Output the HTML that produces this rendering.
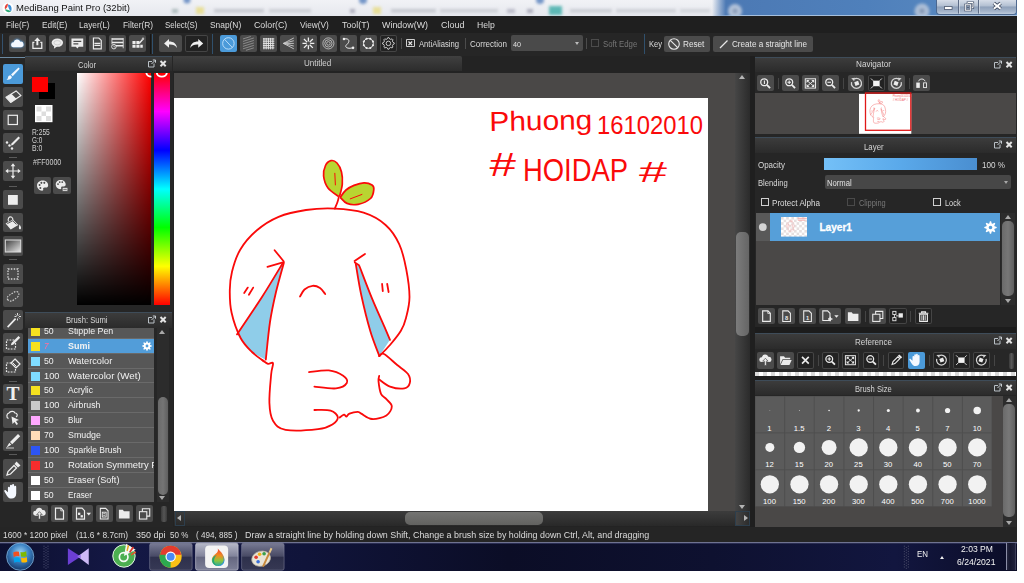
<!DOCTYPE html>
<html lang="en"><head><meta charset="utf-8"><title>MediBang Paint Pro (32bit)</title>
<style>
html,body{margin:0;padding:0;background:#fff;}
body{width:1024px;height:583px;overflow:hidden;position:relative;font-family:"Liberation Sans","DejaVu Sans",sans-serif;font-size:9px;color:#ddd;}
.a{position:absolute;box-sizing:border-box;}
.t{white-space:nowrap;overflow:visible;}
svg{display:block;overflow:visible;}
.a>svg{position:absolute;left:0;top:0;}
</style></head><body>
<div class="a" style="left:0px;top:0px;width:1017px;height:571px;background:#262626;"></div>
<div class="a" style="left:0px;top:0px;width:1017px;height:16px;background:linear-gradient(#f1f2f6,#e6e8ee);overflow:hidden;">
<svg width="1017" height="16" style="position:absolute;left:0;top:0">
<defs><filter id="bl" x="-20%" y="-100%" width="140%" height="300%"><feGaussianBlur stdDeviation="1.6"/></filter>
<linearGradient id="tb" x1="0" x2="1"><stop offset="0" stop-color="#4c79b4" stop-opacity="0"/><stop offset=".045" stop-color="#4c79b4"/><stop offset=".5" stop-color="#4f80bb"/><stop offset="1" stop-color="#5d8cc2"/></linearGradient></defs>
<rect x="712" y="-3" width="310" height="22" fill="url(#tb)"/>
<g filter="url(#bl)" opacity=".75">
<circle cx="187" cy="0" r="3.5" fill="#4a76b8"/><rect x="196" y="7" width="8" height="7" fill="#e8dc7a"/>
<rect x="172" y="9" width="6" height="4" fill="#9aa"/>
<rect x="214" y="9" width="50" height="3.5" fill="#b9bcc4"/><rect x="269" y="9" width="42" height="3.5" fill="#c2c5cc"/>
<circle cx="363" cy="0" r="4" fill="#4a76b8"/><rect x="373" y="7" width="8" height="7" fill="#e8dc7a"/><rect x="350" y="9" width="5" height="4" fill="#99a"/>
<rect x="391" y="9" width="45" height="3.5" fill="#b9bcc4"/><rect x="440" y="9" width="58" height="3.5" fill="#c2c5cc"/><rect x="507" y="9" width="8" height="4" fill="#aab"/>
<rect x="527" y="9" width="6" height="4" fill="#99a"/><circle cx="540" cy="0" r="4" fill="#4a76b8"/>
<rect x="549" y="6" width="13" height="9" fill="#2fa7a2"/>
<rect x="570" y="9" width="42" height="3.5" fill="#c0c3ca"/><rect x="616" y="9" width="60" height="3.5" fill="#c4c7ce"/><rect x="680" y="9" width="30" height="3.5" fill="#c8cbd2"/>
<circle cx="735" cy="11" r="7" fill="#d5dbe6"/><circle cx="735" cy="11" r="2.5" fill="#9aa3b5"/>
<circle cx="922" cy="11" r="7.5" fill="#c9d1df"/><circle cx="922" cy="11" r="2.5" fill="#8d97aa"/>
</g>
</svg></div>
<div class="a" style="left:2px;top:2px;width:12px;height:12px;"><svg width="12" height="12" viewBox="0 0 12 12"><circle cx="6" cy="6" r="5.6" fill="#fff"/><path d="M6 1.5C3 2.5 2.2 5 3 7.5 5 6 6 4 6 1.5z" fill="#e8453c"/><path d="M3 7.5C4 10 7 11 9 9.5 7.5 8 5 7.5 3 7.5z" fill="#2aa876"/><path d="M6 2.5c3 0 4.5 3.5 3 7C7.5 8 6 6 6 2.5z" fill="#3a8fd6"/></svg></div>
<div class="a t" style="left:16.2px;top:2.1px;width:133.8px;height:12px;line-height:12px;color:#111;font-size:9.51px;transform:scaleX(0.9977);transform-origin:0 50%;">MediBang Paint Pro (32bit)</div>
<div class="a" style="left:937px;top:0px;width:78.5px;height:14px;background:linear-gradient(#d6dde8,#b3c0d2 42%,#8fa1ba 50%,#a3b3c9 80%,#bccadb);border-radius:0 0 3px 3px;box-shadow:0 0 0 1px rgba(70,84,110,.6);">
<svg width="78.500" height="14" viewBox="0 0 78.500 14" style="position:absolute;left:0;top:0">
<path d="M21.500 0v13.500M41.500 0v13.500" stroke="#5d6c86" stroke-width="1"/>
<path d="M22.500 0v13.500M42.500 0v13.500" stroke="#dfe6ef" stroke-opacity=".6" stroke-width="1"/>
<rect x="7.500" y="6.600" width="7.600" height="2.800" fill="#fff" stroke="#4a566c" stroke-width=".8"/>
<path d="M30.800 4.300v-1.800h5.200v5.200h-1.800" fill="none" stroke="#46536a" stroke-width="2.200"/><path d="M30.800 4.300v-1.800h5.200v5.200h-1.800" fill="none" stroke="#fff" stroke-width="1"/><rect x="28.300" y="4.800" width="5.400" height="5.400" fill="#97a8c0" stroke="#46536a" stroke-width="2.200"/><rect x="28.300" y="4.800" width="5.400" height="5.400" fill="none" stroke="#fff" stroke-width="1"/><rect x="30.200" y="6.700" width="1.600" height="1.600" fill="#46536a"/>
<path d="M56.800 3.200l6.800 5.600M63.600 3.200l-6.800 5.600" stroke="#3d485c" stroke-width="3.600"/>
<path d="M56.800 3.200l6.800 5.600M63.600 3.200l-6.800 5.600" stroke="#fff" stroke-width="2"/>
</svg></div>
<div class="a" style="left:712px;top:14.5px;width:305px;height:1.5px;background:linear-gradient(to right,rgba(175,198,224,0),rgba(175,198,224,.9) 8%,rgba(175,198,224,.9));"></div>
<div class="a" style="left:0px;top:16px;width:1017px;height:16.5px;background:#1f1f1f;"></div>
<div class="a t" style="left:6.2px;top:18.7px;width:43.3px;height:12px;line-height:12px;color:#dcdcdc;font-size:8.9px;transform:scaleX(0.9090);transform-origin:0 50%;">File(F)</div>
<div class="a t" style="left:41.7px;top:18.7px;width:45.3px;height:12px;line-height:12px;color:#dcdcdc;font-size:8.9px;transform:scaleX(0.9328);transform-origin:0 50%;">Edit(E)</div>
<div class="a t" style="left:79.2px;top:18.7px;width:50.8px;height:12px;line-height:12px;color:#dcdcdc;font-size:8.9px;transform:scaleX(0.9320);transform-origin:0 50%;">Layer(L)</div>
<div class="a t" style="left:122.5px;top:18.7px;width:50px;height:12px;line-height:12px;color:#dcdcdc;font-size:8.9px;transform:scaleX(0.9363);transform-origin:0 50%;">Filter(R)</div>
<div class="a t" style="left:165px;top:18.7px;width:52.5px;height:12px;line-height:12px;color:#dcdcdc;font-size:8.9px;transform:scaleX(0.8905);transform-origin:0 50%;">Select(S)</div>
<div class="a t" style="left:210px;top:18.7px;width:51.2px;height:12px;line-height:12px;color:#dcdcdc;font-size:8.9px;transform:scaleX(0.9441);transform-origin:0 50%;">Snap(N)</div>
<div class="a t" style="left:253.7px;top:18.7px;width:53.3px;height:12px;line-height:12px;color:#dcdcdc;font-size:8.9px;transform:scaleX(0.9932);transform-origin:0 50%;">Color(C)</div>
<div class="a t" style="left:299.5px;top:18.7px;width:48.7px;height:12px;line-height:12px;color:#dcdcdc;font-size:8.9px;transform:scaleX(0.9286);transform-origin:0 50%;">View(V)</div>
<div class="a t" style="left:341.7px;top:18.7px;width:47.5px;height:12px;line-height:12px;color:#dcdcdc;font-size:8.9px;transform:scaleX(0.9960);transform-origin:0 50%;">Tool(T)</div>
<div class="a t" style="left:382px;top:18.7px;width:66px;height:12px;line-height:12px;color:#dcdcdc;font-size:8.9px;transform:scaleX(1.0032);transform-origin:0 50%;">Window(W)</div>
<div class="a t" style="left:440.7px;top:18.7px;width:43.5px;height:12px;line-height:12px;color:#dcdcdc;font-size:8.9px;transform:scaleX(1.0134);transform-origin:0 50%;">Cloud</div>
<div class="a t" style="left:476.7px;top:18.7px;width:37.8px;height:12px;line-height:12px;color:#dcdcdc;font-size:8.9px;transform:scaleX(0.9752);transform-origin:0 50%;">Help</div>
<div class="a" style="left:0px;top:32.5px;width:1017px;height:23.5px;background:#262626;"></div>
<div class="a" style="left:2px;top:33.5px;width:1px;height:20.5px;background:#34516d;"></div>
<div class="a" style="left:150px;top:33.5px;width:1px;height:20.5px;background:#151515;"></div>
<div class="a" style="left:152px;top:33.5px;width:1px;height:20.5px;background:#30506c;"></div>
<div class="a" style="left:212px;top:33.5px;width:1px;height:20.5px;background:#30506c;"></div>
<div class="a" style="left:644px;top:33.5px;width:1px;height:20.5px;background:#30506c;"></div>
<div class="a" style="left:9.3px;top:35px;width:16.7px;height:16.8px;background:#4b4b4b;border-radius:2px;"><svg width="16.7" height="16.8" viewBox="0 0 17 17"><defs><filter id="glow" x="-50%" y="-50%" width="200%" height="200%"><feGaussianBlur stdDeviation="1.2"/></filter></defs><path d="M4.500 12.500a2.700 2.700 0 0 1 .3-5.400 3.600 3.600 0 0 1 6.800-.6 2.900 2.900 0 0 1 1 5.800z" fill="#58a8f0" filter="url(#glow)"/><path d="M4.500 12.300a2.500 2.500 0 0 1 .3-5 3.500 3.500 0 0 1 6.700-.6 2.800 2.800 0 0 1 .9 5.600z" fill="#f4f8ff"/></svg></div>
<div class="a" style="left:29.33px;top:35px;width:16.7px;height:16.8px;background:#4b4b4b;border-radius:2px;"><svg width="16.7" height="16.8" viewBox="0 0 17 17"><path d="M5.500 7.500h-1.500v6h9v-6h-1.500" fill="none" stroke="#ececec" stroke-width="1.3" /><path d="M8.500 2.500l3.200 3.500h-2.200v4.500h-2v-4.500h-2.200z" fill="#ececec" /></svg></div>
<div class="a" style="left:49.36px;top:35px;width:16.7px;height:16.8px;background:#4b4b4b;border-radius:2px;"><svg width="16.7" height="16.8" viewBox="0 0 17 17"><ellipse cx="8.500" cy="7.800" rx="5.800" ry="4.200" fill="#ececec"/><path d="M5.500 10.500l-.5 3.500 3.500-2.500z" fill="#ececec" /><ellipse cx="8.500" cy="7.800" rx="3.500" ry="2.200" fill="none" stroke="#bdbdbd" stroke-width=".6"/></svg></div>
<div class="a" style="left:69.39px;top:35px;width:16.7px;height:16.8px;background:#4b4b4b;border-radius:2px;"><svg width="16.7" height="16.8" viewBox="0 0 17 17"><path d="M2.500 3.500h12v8.500h-4.500l-1.500 1.800-1.500-1.800h-4.500z" fill="#ececec" /><path d="M4.500 6.500h8M4.500 9h5" stroke="#4b4b4b" stroke-width="1.200"/></svg></div>
<div class="a" style="left:89.42px;top:35px;width:16.7px;height:16.8px;background:#4b4b4b;border-radius:2px;"><svg width="16.7" height="16.8" viewBox="0 0 17 17"><path d="M4.500 3h5.500l2.500 2.500v8.500h-8z" fill="none" stroke="#ececec" stroke-width="1.2" /><path d="M5.500 8.500h6M5.500 10.500h6" stroke="#ececec" stroke-width="1.300"/></svg></div>
<div class="a" style="left:109.45px;top:35px;width:16.7px;height:16.8px;background:#4b4b4b;border-radius:2px;"><svg width="16.7" height="16.8" viewBox="0 0 17 17"><path d="M3 4h11.500M3 7.500h11.500M7 11h7.500" stroke="#ececec" stroke-width="1.500"/><path d="M3 3v6.500M14.500 3v10.500" fill="none" stroke="#ececec" stroke-width="0.8" /><circle cx="5" cy="11.800" r="2.300" fill="none" stroke="#ececec" stroke-width=".9"/><path d="M5 10.500v1.500h1.200" fill="none" stroke="#ececec" stroke-width="0.7" /></svg></div>
<div class="a" style="left:129.48px;top:35px;width:16.7px;height:16.8px;background:#4b4b4b;border-radius:2px;"><svg width="16.7" height="16.8" viewBox="0 0 17 17"><path d="M3.500 6h3.200v3h-3.200zM7.500 6h3.200v3h-3.200zM3.500 9.800h3.200v3.200h-3.200zM7.500 9.800h3.200v3.200h-3.200zM11.500 9.800h2.500v3.200h-2.500z" fill="#ececec"/><path d="M10.500 8.500l3.800-4.500" stroke="#ececec" stroke-width="1.500"/><circle cx="14.300" cy="3.800" r="1.200" fill="#bbb"/></svg></div>
<div class="a" style="left:159.2px;top:35px;width:22.5px;height:16.8px;background:#4b4b4b;border-radius:2px;"><svg width="22.5" height="16.8" viewBox="0 0 22.5 17"><path d="M5 8.500l5-4.500v2.600c4.500 0 7.500 2 8 6.500-1.800-2.800-4.200-3.600-8-3.400v3.300z" fill="#f0f0f0"/></svg></div>
<div class="a" style="left:184.5px;top:35px;width:23px;height:16.8px;background:#222;box-shadow:inset 0 0 0 1px #454545;border-radius:2px;"><svg width="23" height="16.8" viewBox="0 0 22.5 17"><path d="M18 8.500l-5-4.500v2.600c-4.500 0-7.500 2-8 6.500 1.800-2.800 4.200-3.600 8-3.400v3.300z" fill="#f0f0f0"/></svg></div>
<div class="a" style="left:220px;top:35px;width:16.8px;height:16.8px;background:#4b9ad9;border-radius:2px;"><svg width="16.8" height="16.8" viewBox="0 0 17 17"><circle cx="8.500" cy="8.500" r="5.800" fill="none" stroke="#b9dcfa" stroke-width="1"/><path d="M4.500 4.300l8 8.400" stroke="#b9dcfa" stroke-width="1"/></svg></div>
<div class="a" style="left:240.06px;top:35px;width:16.8px;height:16.8px;background:#4b4b4b;border-radius:2px;"><svg width="16.8" height="16.8" viewBox="0 0 17 17"><path d="M3 6.500l11-3.500M3 9l11-3.500M3 11.500l11-3.500M3 14l11-3.500M3 4l8-2.500M6 15.500l8-2.500" stroke="#9a9a9a" stroke-width=".8"/></svg></div>
<div class="a" style="left:260.12px;top:35px;width:16.8px;height:16.8px;background:#4b4b4b;border-radius:2px;"><svg width="16.8" height="16.8" viewBox="0 0 17 17"><path d="M4 3v11.500M6.250 3v11.500M8.500 3v11.500M10.750 3v11.500M13 3v11.500M3 4h11.500M3 6.250h11.500M3 8.500h11.500M3 10.750h11.500M3 13h11.500" stroke="#e8e8e8" stroke-width="1"/></svg></div>
<div class="a" style="left:280.18px;top:35px;width:16.8px;height:16.8px;background:#4b4b4b;border-radius:2px;"><svg width="16.8" height="16.8" viewBox="0 0 17 17"><path d="M3.500 8.500l10.500-5.500M3.500 8.500l10.500-2.700M3.500 8.500h10.500M3.500 8.500l10.500 2.700M3.500 8.500l10.500 5.500" stroke="#cfcfcf" stroke-width=".9"/></svg></div>
<div class="a" style="left:300.24px;top:35px;width:16.8px;height:16.8px;background:#4b4b4b;border-radius:2px;"><svg width="16.8" height="16.8" viewBox="0 0 17 17"><path d="M8.500 2.500v4.200M8.500 10.300v4.200M2.500 8.500h4.200M10.300 8.500h4.200M4 4l3.200 3.200M9.800 9.800l3.200 3.200M13 4l-3.200 3.200M7.200 9.800l-3.200 3.200" stroke="#f0f0f0" stroke-width="1.300"/></svg></div>
<div class="a" style="left:320.3px;top:35px;width:16.8px;height:16.8px;background:#4b4b4b;border-radius:2px;"><svg width="16.8" height="16.8" viewBox="0 0 17 17"><circle cx="8.500" cy="8.500" r="5.600" fill="none" stroke="#d0d0d0" stroke-width=".8"/><circle cx="8.500" cy="8.500" r="3.700" fill="none" stroke="#d0d0d0" stroke-width=".8"/><circle cx="8.500" cy="8.500" r="1.800" fill="none" stroke="#d0d0d0" stroke-width=".8"/></svg></div>
<div class="a" style="left:340.36px;top:35px;width:16.8px;height:16.8px;background:#4b4b4b;border-radius:2px;"><svg width="16.8" height="16.8" viewBox="0 0 17 17"><path d="M4 4c6-1 6 3 3 5.500s0 5 6 3.500" fill="none" stroke="#ececec" stroke-width="1" /><circle cx="4" cy="4" r="1.300" fill="#ececec"/><circle cx="13.200" cy="13" r="1.300" fill="#ececec"/></svg></div>
<div class="a" style="left:360.42px;top:35px;width:16.8px;height:16.8px;background:#4b4b4b;border-radius:2px;"><svg width="16.8" height="16.8" viewBox="0 0 17 17"><circle cx="8.500" cy="8.500" r="5" fill="none" stroke="#ececec" stroke-width="1"/><circle cx="13.12" cy="10.41" r="1.050" fill="#ececec"/><circle cx="10.41" cy="13.12" r="1.050" fill="#ececec"/><circle cx="6.59" cy="13.12" r="1.050" fill="#ececec"/><circle cx="3.88" cy="10.41" r="1.050" fill="#ececec"/><circle cx="3.88" cy="6.59" r="1.050" fill="#ececec"/><circle cx="6.59" cy="3.88" r="1.050" fill="#ececec"/><circle cx="10.41" cy="3.88" r="1.050" fill="#ececec"/><circle cx="13.12" cy="6.59" r="1.050" fill="#ececec"/></svg></div>
<div class="a" style="left:380.48px;top:35px;width:16.8px;height:16.8px;background:#222;box-shadow:inset 0 0 0 1px #454545;border-radius:2px;"><svg width="16.8" height="16.8" viewBox="0 0 17 17"><path d="M14.37 7.92L14.37 9.08L12.90 9.84L12.56 10.67L13.06 12.24L12.24 13.06L10.67 12.56L9.84 12.90L9.08 14.37L7.92 14.37L7.16 12.90L6.33 12.56L4.76 13.06L3.94 12.24L4.44 10.67L4.10 9.84L2.63 9.08L2.63 7.92L4.10 7.16L4.44 6.33L3.94 4.76L4.76 3.94L6.33 4.44L7.16 4.10L7.92 2.63L9.08 2.63L9.84 4.10L10.67 4.44L12.24 3.94L13.06 4.76L12.56 6.33L12.90 7.16z" fill="none" stroke="#d8d8d8" stroke-width=".9" stroke-linejoin="round"/><circle cx="8.500" cy="8.500" r="2.300" fill="none" stroke="#d8d8d8" stroke-width=".9"/></svg></div>
<div class="a" style="left:401px;top:38px;width:1px;height:11px;background:#4c4c4c;"></div>
<div class="a" style="left:406.2px;top:38.5px;width:8.6px;height:8.6px;box-shadow:inset 0 0 0 1px #cfcfcf;border-radius:1px;"><svg width="8.600" height="8.600" viewBox="0 0 8.600 8.600"><path d="M2.500 2.500l3.600 3.600M6.100 2.500l-3.600 3.600" stroke="#e6e6e6" stroke-width="1.300"/></svg></div>
<div class="a t" style="left:419.2px;top:37.9px;width:60px;height:12px;line-height:12px;color:#dcdcdc;font-size:8.9px;transform:scaleX(0.8626);transform-origin:0 50%;">AntiAliasing</div>
<div class="a" style="left:464.5px;top:38px;width:1px;height:11px;background:#4c4c4c;"></div>
<div class="a t" style="left:470px;top:37.9px;width:57px;height:12px;line-height:12px;color:#dcdcdc;font-size:8.9px;transform:scaleX(0.9038);transform-origin:0 50%;">Correction</div>
<div class="a" style="left:511.2px;top:35px;width:71.8px;height:15.8px;background:#4a4a4a;border-radius:2px;"></div>
<div class="a t" style="left:513px;top:38.5px;width:28px;height:12px;line-height:12px;color:#e0e0e0;font-size:8px;transform:scaleX(0.8990);transform-origin:0 50%;">40</div>
<div class="a" style="left:574.5px;top:42px;width:0px;height:0px;border-left:2.500px solid transparent;border-right:2.500px solid transparent;border-top:3px solid #bdbdbd;"></div>
<div class="a" style="left:586px;top:38px;width:1px;height:11px;background:#4c4c4c;"></div>
<div class="a" style="left:591.2px;top:39px;width:7.5px;height:7.5px;box-shadow:inset 0 0 0 1px #4c4c4c;"></div>
<div class="a t" style="left:603.2px;top:37.9px;width:54.3px;height:12px;line-height:12px;color:#767676;font-size:8.9px;transform:scaleX(0.8799);transform-origin:0 50%;">Soft Edge</div>
<div class="a t" style="left:649.4px;top:37.9px;width:33.1px;height:12px;line-height:12px;color:#dcdcdc;font-size:8.9px;transform:scaleX(0.8566);transform-origin:0 50%;">Key</div>
<div class="a" style="left:664.4px;top:35.5px;width:45.6px;height:16px;background:#4b4b4b;border-radius:2px;"><svg width="16" height="16" viewBox="0 0 16 16" style="position:absolute;left:2px;top:0"><circle cx="8" cy="8" r="5.300" fill="none" stroke="#e8e8e8" stroke-width="1.100"/><path d="M4.300 4.300l7.400 7.400" stroke="#e8e8e8" stroke-width="1.100"/></svg></div>
<div class="a t" style="left:683.1px;top:37.9px;width:41.4px;height:12px;line-height:12px;color:#e6e6e6;font-size:8.9px;transform:scaleX(0.9230);transform-origin:0 50%;">Reset</div>
<div class="a" style="left:713px;top:35.5px;width:99.5px;height:16px;background:#4b4b4b;border-radius:2px;"><svg width="16" height="16" viewBox="0 0 16 16" style="position:absolute;left:3px;top:0"><path d="M4 12L11.500 4.500" stroke="#e8e8e8" stroke-width="1.300"/></svg></div>
<div class="a t" style="left:731.9px;top:37.9px;width:95px;height:12px;line-height:12px;color:#e6e6e6;font-size:8.9px;transform:scaleX(0.9159);transform-origin:0 50%;">Create a straight line</div>
<div class="a" style="left:0px;top:56px;width:25px;height:471px;background:#262626;"></div>
<div class="a" style="left:0px;top:56.7px;width:25px;height:1px;background:#6d8ba3;"></div>
<div class="a" style="left:3px;top:64px;width:20px;height:19.8px;background:#4b9ad9;border-radius:2px;"><svg width="20" height="20" viewBox="0 0 20 20"><path d="M15.500 3.500l1.200 1.200-7 7.500-1.700-1.700z" fill="#f2f8ff"/><path d="M7.300 11.300l1.700 1.700c-.5 1.800-2.500 3.300-5.500 2.700 1.500-.7 1.300-1.700 1.600-2.700.3-1 1.200-1.700 2.200-1.700z" fill="#f2f8ff"/></svg></div>
<div class="a" style="left:3px;top:87.2px;width:20px;height:19.8px;background:#4b4b4b;border-radius:2px;"><svg width="20" height="20" viewBox="0 0 20 20"><path d="M13.100 3.900l4.900 4.700-10.300 6.800-4.700-5.100z" fill="none" stroke="#ececec" stroke-width="1.200" stroke-linejoin="round"/><path d="M8.600 6.900l4.800 4.800-5.700 3.700-4.700-5.100z" fill="#ececec"/></svg></div>
<div class="a" style="left:3px;top:110.4px;width:20px;height:19.8px;background:#4b4b4b;border-radius:2px;"><svg width="20" height="20" viewBox="0 0 20 20"><rect x="5.200" y="5.300" width="9.200" height="9.200" fill="none" stroke="#ececec" stroke-width="1.200"/></svg></div>
<div class="a" style="left:3px;top:133.4px;width:20px;height:19.8px;background:#4b4b4b;border-radius:2px;"><svg width="20" height="20" viewBox="0 0 20 20"><path d="M15.500 3.500l1.500 1.500-7 7-2 .5.500-2z" fill="#ececec"/><circle cx="4" cy="9.500" r="1.200" fill="#ececec"/><circle cx="6.500" cy="12.500" r="1.200" fill="#ececec"/><circle cx="9" cy="15.500" r="1.200" fill="#ececec"/></svg></div>
<div class="a" style="left:3px;top:161.2px;width:20px;height:19.8px;background:#4b4b4b;border-radius:2px;"><svg width="20" height="20" viewBox="0 0 20 20"><path d="M10 4v12M4 10h12" stroke="#ececec" stroke-width="1.200"/><path d="M10 2.300l2.300 2.900h-4.600zM10 17.700l2.300-2.900h-4.600zM2.300 10l2.900-2.300v4.600zM17.700 10l-2.900-2.300v4.600z" fill="#ececec"/></svg></div>
<div class="a" style="left:3px;top:189.7px;width:20px;height:19.8px;background:#4b4b4b;border-radius:2px;"><svg width="20" height="20" viewBox="0 0 20 20"><rect x="5" y="5" width="9.800" height="9.800" fill="#ededed"/></svg></div>
<div class="a" style="left:3px;top:212.7px;width:20px;height:19.8px;background:#4b4b4b;border-radius:2px;"><svg width="20" height="20" viewBox="0 0 20 20"><path d="M2.600 10.500l7.300-3.900 5.400 5.400-7.600 4.400z" fill="#ececec"/><path d="M2.600 10.500l7.300-3.900 5.400 5.400" fill="none" stroke="#4b4b4b" stroke-width=".01"/><path d="M5.500 8.500c-1.200-3 .8-5.200 2.800-4.500 1.500.6 1.700 2.300 1.600 3.200" fill="none" stroke="#ececec" stroke-width="1.100"/><path d="M4.300 10.600l5.400-2.800 3.700 3.600" fill="none" stroke="#4b4b4b" stroke-width=".9"/><path d="M16.300 11.500c1.300 1.500 2.200 3 1.600 4.200-.5.900-1.900.7-2-.5-.1-1 .4-2 .4-3.700z" fill="#ececec"/></svg></div>
<div class="a" style="left:3px;top:235.8px;width:20px;height:19.8px;background:#4b4b4b;border-radius:2px;"><svg width="20" height="20" viewBox="0 0 20 20"><defs><linearGradient id="tg" x1="0" y1="0" x2="1" y2="1"><stop offset="0" stop-color="#3c3c3c"/><stop offset="1" stop-color="#e8e8e8"/></linearGradient></defs><rect x="2.300" y="4" width="15.400" height="12" fill="url(#tg)" stroke="#d8d8d8" stroke-width="1.100"/></svg></div>
<div class="a" style="left:3px;top:264px;width:20px;height:19.8px;background:#4b4b4b;border-radius:2px;"><svg width="20" height="20" viewBox="0 0 20 20"><rect x="5" y="5" width="10" height="10" fill="none" stroke="#d8d8d8" stroke-width="1.300" stroke-dasharray="1.500 1.350"/></svg></div>
<div class="a" style="left:3px;top:287.2px;width:20px;height:19.8px;background:#4b4b4b;border-radius:2px;"><svg width="20" height="20" viewBox="0 0 20 20"><path d="M5 13c-2-2 0-4.500 2.500-5.500 2-1 3.500-3 6-3 2.500.3 3 3 1.500 5-1.500 2-3 2-4.500 3.500-1.500 1.500-4 1.500-5.500 0z" fill="none" stroke="#d0d0d0" stroke-width="1.100" stroke-dasharray="1.600 1.200"/></svg></div>
<div class="a" style="left:3px;top:310.2px;width:20px;height:19.8px;background:#4b4b4b;border-radius:2px;"><svg width="20" height="20" viewBox="0 0 20 20"><path d="M4 16.500l8-8.500 1.200 1.200-8 8.500z" fill="#ececec"/><path d="M14.500 3v2.500M14.500 8.500v2M11.500 6.500h2M16 6.500h2M12.500 4.500l1 1M16.500 4.500l-1 1M16.500 8.500l-1-1" stroke="#ececec" stroke-width=".9"/></svg></div>
<div class="a" style="left:3px;top:333.3px;width:20px;height:19.8px;background:#4b4b4b;border-radius:2px;"><svg width="20" height="20" viewBox="0 0 20 20"><rect x="3.500" y="7" width="9" height="9" fill="none" stroke="#ececec" stroke-width="1.200" stroke-dasharray="1.800 1.200"/><path d="M15.500 3l1.700 1.700-7 7-2.300.6.600-2.300z" fill="#ececec"/></svg></div>
<div class="a" style="left:3px;top:356.3px;width:20px;height:19.8px;background:#4b4b4b;border-radius:2px;"><svg width="20" height="20" viewBox="0 0 20 20"><rect x="3.500" y="7" width="9" height="9" fill="none" stroke="#ececec" stroke-width="1.200" stroke-dasharray="1.800 1.200"/><path d="M12 3l5 5-4 4-5-5z" fill="#4b4b4b" stroke="#ececec" stroke-width="1.200"/><path d="M9.500 6.500l4 4" stroke="#ececec" stroke-width="1"/></svg></div>
<div class="a" style="left:3px;top:384.2px;width:20px;height:19.8px;background:#4b4b4b;border-radius:2px;"><div class="a t" style="left:0;top:0;width:20px;height:20px;line-height:20.500px;text-align:center;font-family:'Liberation Serif',serif;font-weight:bold;font-size:19.500px;color:#f0f0f0;">T</div></div>
<div class="a" style="left:3px;top:408px;width:20px;height:19.8px;background:#4b4b4b;border-radius:2px;"><svg width="20" height="20" viewBox="0 0 20 20"><path d="M5.500 10.500c-2.500-1-2-5 .5-5.500 1-2 5-2.500 6 0 2.500 0 3 3 1 4" fill="none" stroke="#ececec" stroke-width="1.200"/><path d="M8.500 8.500l7.500 3.500-3 1 2 3-1.500 1-2-3-2 2z" fill="#ececec"/></svg></div>
<div class="a" style="left:3px;top:430.8px;width:20px;height:19.8px;background:#4b4b4b;border-radius:2px;"><svg width="20" height="20" viewBox="0 0 20 20"><path d="M15 3l2.200 2.200-8 8-2.200-2.200z" fill="#ececec"/><path d="M6.300 11.800l2 2-4.800 2.700z" fill="#ececec"/><path d="M3 17h8" stroke="#ececec" stroke-width=".8"/></svg></div>
<div class="a" style="left:3px;top:459px;width:20px;height:19.8px;background:#4b4b4b;border-radius:2px;"><svg width="20" height="20" viewBox="0 0 20 20"><path d="M4 16l1-3.500 6-6 2.500 2.500-6 6z" fill="none" stroke="#ececec" stroke-width="1.300"/><path d="M11.500 5l2-2.500 4 4-2.500 2z" fill="#ececec"/></svg></div>
<div class="a" style="left:3px;top:482.4px;width:20px;height:19.8px;background:#4b4b4b;border-radius:2px;"><svg width="20" height="20" viewBox="0 0 20 20"><g transform="translate(-1.600,-1.400) scale(1.300)"><path d="M5 9v-3.500a.8.800 0 0 1 1.600 0v2.500-4a.8.800 0 0 1 1.600 0v3.500-4a.8.800 0 0 1 1.600 0v4.200-3a.8.800 0 0 1 1.600 0v5.300c0 2.500-1.500 3.800-3.500 3.800s-3-1-4-2.800l-1.600-2.700c-.4-.8.600-1.400 1.200-.7z" fill="#f4f8ff"/></g></svg></div>
<div class="a" style="left:9px;top:157.4px;width:8px;height:1px;background:#5a5a5a;"></div>
<div class="a" style="left:9px;top:185.6px;width:8px;height:1px;background:#5a5a5a;"></div>
<div class="a" style="left:9px;top:259.3px;width:8px;height:1px;background:#5a5a5a;"></div>
<div class="a" style="left:9px;top:380.8px;width:8px;height:1px;background:#5a5a5a;"></div>
<div class="a" style="left:9px;top:454.4px;width:8px;height:1px;background:#5a5a5a;"></div>
<div class="a" style="left:25px;top:56px;width:148px;height:256px;background:#262626;"></div>
<div class="a" style="left:25px;top:56.2px;width:146.6px;height:14.6px;background:linear-gradient(#3d3d3d,#2b2b2b);"></div>
<div class="a" style="left:25px;top:56.2px;width:146.6px;height:1px;background:#3e4c59;"></div>
<div class="a t" style="left:77.7px;top:58.6px;width:38px;height:12px;line-height:12px;color:#d6d6d6;font-size:8.9px;transform:scaleX(0.8487);transform-origin:0 50%;">Color</div>
<svg class="a" style="left:147.7px;top:59.2px" width="22" height="10" viewBox="0 0 22 10"><path d="M4 2.500h-3.500v5.500h5.500v-3.500" fill="none" stroke="#b9c0c6" stroke-width="1"/><path d="M3.500 5l3.500-3.500M4.800 1h2.700v2.700" fill="none" stroke="#c9cfd4" stroke-width="1"/><path d="M12.500 2l5.200 5.200M17.700 2l-5.200 5.200" stroke="#e4e4e4" stroke-width="2"/></svg>
<div class="a" style="left:38.6px;top:83.2px;width:16px;height:15.6px;background:#000;"></div>
<div class="a" style="left:32px;top:76.8px;width:16px;height:15.6px;background:#ff0000;"></div>
<div class="a" style="left:34.5px;top:105.2px;width:17.5px;height:17.2px;background:#fff;"><svg width="17.500" height="17.200" viewBox="0 0 17.500 17.200"><rect width="17.500" height="17.200" fill="#fff"/><rect x="1.500" y="1.500" width="5" height="5" fill="#ddd"/><rect x="11" y="1.500" width="5" height="5" fill="#ddd"/><rect x="6.500" y="6.500" width="4.500" height="4.500" fill="#ddd"/><rect x="1.500" y="11" width="5" height="5" fill="#ddd"/><rect x="11" y="11" width="5" height="5" fill="#ddd"/></svg></div>
<div class="a t" style="left:32.2px;top:126px;width:37.8px;height:12px;line-height:12px;color:#d0d0d0;font-size:8.9px;transform:scaleX(0.7516);transform-origin:0 50%;">R:255</div>
<div class="a t" style="left:32.2px;top:134.3px;width:30.3px;height:12px;line-height:12px;color:#d0d0d0;font-size:8.9px;transform:scaleX(0.7200);transform-origin:0 50%;">G:0</div>
<div class="a t" style="left:32.2px;top:142.4px;width:30.3px;height:12px;line-height:12px;color:#d0d0d0;font-size:8.9px;transform:scaleX(0.7732);transform-origin:0 50%;">B:0</div>
<div class="a t" style="left:32.7px;top:155.6px;width:48.3px;height:12px;line-height:12px;color:#d0d0d0;font-size:8.9px;transform:scaleX(0.7967);transform-origin:0 50%;">#FF0000</div>
<div class="a" style="left:33.5px;top:177px;width:17.2px;height:17.2px;background:#4b4b4b;border-radius:2px;"><svg width="17.2" height="17.2" viewBox="0 0 17 17"><path d="M8.500 3.500c-3.300 0-5.500 2.300-5.500 5s2.200 5 5 5c1 0 1.300-.6 1.100-1.300-.3-1 .2-1.700 1.400-1.700h1.300c1.400 0 2.200-.9 2.200-2.300 0-2.700-2.400-4.700-5.500-4.700z" fill="#ececec"/><circle cx="5.500" cy="8" r="1" fill="#4b4b4b"/><circle cx="7.300" cy="5.800" r="1" fill="#4b4b4b"/><circle cx="10.200" cy="5.800" r="1" fill="#4b4b4b"/><circle cx="6.300" cy="10.800" r="1" fill="#4b4b4b"/></svg></div>
<div class="a" style="left:53.3px;top:177px;width:17.5px;height:17.2px;background:#4b4b4b;border-radius:2px;"><svg width="17.5" height="17.2" viewBox="0 0 17 17"><path d="M7.500 3c-3 0-5 2-5 4.500s2 4.500 4.500 4.500c.9 0 1.200-.5 1-1.100-.3-1 .2-1.500 1.200-1.500h1.200c1.300 0 2-.8 2-2 0-2.500-2.100-4.400-4.900-4.400z" fill="#ececec"/><circle cx="4.800" cy="7" r=".9" fill="#4b4b4b"/><circle cx="6.500" cy="5" r=".9" fill="#4b4b4b"/><circle cx="9" cy="5" r=".9" fill="#4b4b4b"/><rect x="9" y="10.500" width="5.500" height="3.500" fill="#ececec" stroke="#4b4b4b" stroke-width=".6"/><path d="M10 12.200h3.500" stroke="#4b4b4b" stroke-width=".8"/></svg></div>
<div class="a" style="left:77.2px;top:73px;width:74.2px;height:232px;background:linear-gradient(to bottom,rgba(0,0,0,0),#000),linear-gradient(to right,#fff,#f00);"></div>
<div class="a" style="left:154.2px;top:73px;width:15.8px;height:232px;background:linear-gradient(to bottom,#ff0000 0%,#ff00ff 16.600%,#0000ff 33.300%,#00ffff 50%,#00ff00 66.600%,#ffff00 83.300%,#ff0000 100%);"></div>
<svg class="a" style="left:140px;top:66px" width="34" height="14" viewBox="140 66 34 14"><defs><clipPath id="cpA"><rect x="140" y="73" width="11.400" height="8"/></clipPath><clipPath id="cpB"><rect x="152" y="73" width="22" height="8"/></clipPath></defs><ellipse cx="151.400" cy="72.600" rx="5" ry="4" fill="none" stroke="#fff" stroke-width="1.900" clip-path="url(#cpA)"/><ellipse cx="161.800" cy="72.600" rx="5" ry="4" fill="none" stroke="#fff" stroke-width="1.900" clip-path="url(#cpB)"/></svg>
<div class="a" style="left:25px;top:312px;width:148px;height:215px;background:#262626;"></div>
<div class="a" style="left:27.8px;top:324px;width:126.4px;height:178px;background:#6a6a6a;"></div>
<div class="a" style="left:27.8px;top:324px;width:126.4px;height:14px;background:#575757;"></div>
<div class="a" style="left:30.5px;top:326.6px;width:9px;height:9.2px;background:#f5e11f;"></div>
<div class="a t" style="left:44.3px;top:325.1px;width:29.7px;height:12px;line-height:12px;color:#efefef;font-size:9.7px;transform:scaleX(0.9002);transform-origin:0 50%;">50</div>
<div class="a t" style="left:68px;top:325.1px;width:65.3px;height:12px;line-height:12px;color:#f2f2f2;font-size:9.7px;transform:scaleX(0.9142);transform-origin:0 50%;">Stipple Pen</div>
<div class="a" style="left:27.8px;top:339px;width:126.4px;height:14px;background:#529dd9;"></div>
<div class="a" style="left:30.5px;top:341.6px;width:9px;height:9.2px;background:#f5e11f;"></div>
<div class="a t" style="left:44.3px;top:340.1px;width:24.6px;height:12px;line-height:12px;color:#ff6f9d;font-size:9.7px;transform:scaleX(0.8538);transform-origin:0 50%;font-style:italic;">7</div>
<div class="a t" style="left:68px;top:340.1px;width:42px;height:12px;line-height:12px;color:#f2f2f2;font-size:9.7px;transform:scaleX(0.9289);transform-origin:0 50%;font-weight:bold;">Sumi</div>
<svg class="a" style="left:141.600px;top:341.2px" width="10" height="10" viewBox="0 0 10 10"><path d="M9.78 4.53L9.78 5.47L8.16 5.96L7.91 6.56L8.71 8.05L8.05 8.71L6.56 7.91L5.96 8.16L5.47 9.78L4.53 9.78L4.04 8.16L3.44 7.91L1.95 8.71L1.29 8.05L2.09 6.56L1.84 5.96L0.22 5.47L0.22 4.53L1.84 4.04L2.09 3.44L1.29 1.95L1.95 1.29L3.44 2.09L4.04 1.84L4.53 0.22L5.47 0.22L5.96 1.84L6.56 2.09L8.05 1.29L8.71 1.95L7.91 3.44L8.16 4.04z M6.400 5a1.400 1.400 0 1 0-2.800 0 1.400 1.400 0 1 0 2.800 0z" fill="#fff" fill-rule="evenodd"/></svg>
<div class="a" style="left:27.8px;top:354px;width:126.4px;height:14px;background:#575757;"></div>
<div class="a" style="left:30.5px;top:356.6px;width:9px;height:9.2px;background:#7fdcff;"></div>
<div class="a t" style="left:44.3px;top:355.1px;width:29.7px;height:12px;line-height:12px;color:#efefef;font-size:9.7px;transform:scaleX(0.9002);transform-origin:0 50%;">50</div>
<div class="a t" style="left:68px;top:355.1px;width:64.2px;height:12px;line-height:12px;color:#f2f2f2;font-size:9.7px;transform:scaleX(0.9511);transform-origin:0 50%;">Watercolor</div>
<div class="a" style="left:27.8px;top:369px;width:126.4px;height:13px;background:#575757;"></div>
<div class="a" style="left:30.5px;top:371.6px;width:9px;height:9.2px;background:#7fdcff;"></div>
<div class="a t" style="left:44.3px;top:369.6px;width:35.4px;height:12px;line-height:12px;color:#efefef;font-size:9.7px;transform:scaleX(0.9528);transform-origin:0 50%;">100</div>
<div class="a t" style="left:68px;top:369.6px;width:92.6px;height:12px;line-height:12px;color:#f2f2f2;font-size:9.7px;transform:scaleX(0.9991);transform-origin:0 50%;">Watercolor (Wet)</div>
<div class="a" style="left:27.8px;top:383px;width:126.4px;height:14px;background:#575757;"></div>
<div class="a" style="left:30.5px;top:385.6px;width:9px;height:9.2px;background:#f5e11f;"></div>
<div class="a t" style="left:44.3px;top:384.1px;width:29.7px;height:12px;line-height:12px;color:#efefef;font-size:9.7px;transform:scaleX(0.9002);transform-origin:0 50%;">50</div>
<div class="a t" style="left:68px;top:384.1px;width:45px;height:12px;line-height:12px;color:#f2f2f2;font-size:9.7px;transform:scaleX(0.8765);transform-origin:0 50%;">Acrylic</div>
<div class="a" style="left:27.8px;top:398px;width:126.4px;height:14px;background:#575757;"></div>
<div class="a" style="left:30.5px;top:400.6px;width:9px;height:9.2px;background:#c9c9c9;"></div>
<div class="a t" style="left:44.3px;top:399.1px;width:35.4px;height:12px;line-height:12px;color:#efefef;font-size:9.7px;transform:scaleX(0.9528);transform-origin:0 50%;">100</div>
<div class="a t" style="left:68px;top:399.1px;width:52.3px;height:12px;line-height:12px;color:#f2f2f2;font-size:9.7px;transform:scaleX(0.8954);transform-origin:0 50%;">Airbrush</div>
<div class="a" style="left:27.8px;top:413px;width:126.4px;height:14px;background:#575757;"></div>
<div class="a" style="left:30.5px;top:415.6px;width:9px;height:9.2px;background:#ffa8ff;"></div>
<div class="a t" style="left:44.3px;top:414.1px;width:29.7px;height:12px;line-height:12px;color:#efefef;font-size:9.7px;transform:scaleX(0.9002);transform-origin:0 50%;">50</div>
<div class="a t" style="left:68px;top:414.1px;width:34.4px;height:12px;line-height:12px;color:#f2f2f2;font-size:9.7px;transform:scaleX(0.8359);transform-origin:0 50%;">Blur</div>
<div class="a" style="left:27.8px;top:428px;width:126.4px;height:14px;background:#575757;"></div>
<div class="a" style="left:30.5px;top:430.6px;width:9px;height:9.2px;background:#ffdcb8;"></div>
<div class="a t" style="left:44.3px;top:429.1px;width:29.7px;height:12px;line-height:12px;color:#efefef;font-size:9.7px;transform:scaleX(0.9002);transform-origin:0 50%;">70</div>
<div class="a t" style="left:68px;top:429.1px;width:52.9px;height:12px;line-height:12px;color:#f2f2f2;font-size:9.7px;transform:scaleX(0.9118);transform-origin:0 50%;">Smudge</div>
<div class="a" style="left:27.8px;top:443px;width:126.4px;height:14px;background:#575757;"></div>
<div class="a" style="left:30.5px;top:445.6px;width:9px;height:9.2px;background:#2d55f5;"></div>
<div class="a t" style="left:44.3px;top:444.1px;width:35.4px;height:12px;line-height:12px;color:#efefef;font-size:9.7px;transform:scaleX(0.9528);transform-origin:0 50%;">100</div>
<div class="a t" style="left:68px;top:444.1px;width:73.5px;height:12px;line-height:12px;color:#f2f2f2;font-size:9.7px;transform:scaleX(0.8793);transform-origin:0 50%;">Sparkle Brush</div>
<div class="a" style="left:27.8px;top:458px;width:126.4px;height:14px;background:#575757;"></div>
<div class="a" style="left:30.5px;top:460.6px;width:9px;height:9.2px;background:#f52d2d;"></div>
<div class="a t" style="left:44.3px;top:459.1px;width:29.7px;height:12px;line-height:12px;color:#efefef;font-size:9.7px;transform:scaleX(0.9002);transform-origin:0 50%;">10</div>
<div class="a" style="left:60px;top:458px;width:94.200px;height:14.09px;overflow:hidden;">
<div class="a t" style="left:8px;top:1.1px;width:109.6px;height:12px;line-height:12px;color:#f2f2f2;font-size:9.7px;transform:scaleX(0.9790);transform-origin:0 50%;">Rotation Symmetry P</div>
</div>
<div class="a" style="left:27.8px;top:473px;width:126.4px;height:14px;background:#575757;"></div>
<div class="a" style="left:30.5px;top:475.6px;width:9px;height:9.2px;background:#ffffff;"></div>
<div class="a t" style="left:44.3px;top:474.1px;width:29.7px;height:12px;line-height:12px;color:#efefef;font-size:9.7px;transform:scaleX(0.9002);transform-origin:0 50%;">50</div>
<div class="a t" style="left:68px;top:474.1px;width:71.4px;height:12px;line-height:12px;color:#f2f2f2;font-size:9.7px;transform:scaleX(0.9361);transform-origin:0 50%;">Eraser (Soft)</div>
<div class="a" style="left:27.8px;top:488px;width:126.4px;height:14px;background:#575757;"></div>
<div class="a" style="left:30.5px;top:490.6px;width:9px;height:9.2px;background:#ffffff;"></div>
<div class="a t" style="left:44.3px;top:489.1px;width:29.7px;height:12px;line-height:12px;color:#efefef;font-size:9.7px;transform:scaleX(0.9002);transform-origin:0 50%;">50</div>
<div class="a t" style="left:68px;top:489.1px;width:44px;height:12px;line-height:12px;color:#f2f2f2;font-size:9.7px;transform:scaleX(0.8411);transform-origin:0 50%;">Eraser</div>
<div class="a" style="left:25px;top:502px;width:148px;height:25px;background:#262626;"></div>
<div class="a" style="left:25px;top:312px;width:146.6px;height:15.5px;background:linear-gradient(#3d3d3d,#2b2b2b);"></div>
<div class="a" style="left:25px;top:312px;width:146.6px;height:1px;background:#3e4c59;"></div>
<div class="a t" style="left:65.5px;top:313.8px;width:61.5px;height:12px;line-height:12px;color:#d6d6d6;font-size:8.9px;transform:scaleX(0.8586);transform-origin:0 50%;">Brush: Sumi</div>
<svg class="a" style="left:147.7px;top:315px" width="22" height="10" viewBox="0 0 22 10"><path d="M4 2.500h-3.500v5.500h5.500v-3.500" fill="none" stroke="#b9c0c6" stroke-width="1"/><path d="M3.500 5l3.500-3.500M4.800 1h2.700v2.700" fill="none" stroke="#c9cfd4" stroke-width="1"/><path d="M12.500 2l5.200 5.200M17.700 2l-5.200 5.200" stroke="#e4e4e4" stroke-width="2"/></svg>
<div class="a" style="left:156.5px;top:327.5px;width:12px;height:174.3px;background:#2c2c2c;"></div>
<div class="a" style="left:157.5px;top:396.5px;width:10.5px;height:98px;background:linear-gradient(to right,#6a6a6a,#757575 50%,#5f5f5f);border-radius:5px;"></div>
<div class="a" style="left:159.3px;top:329.5px;width:0px;height:0px;border-left:3px solid transparent;border-right:3px solid transparent;border-bottom:4.500px solid #a9a9a9;"></div>
<div class="a" style="left:159.3px;top:495.8px;width:0px;height:0px;border-left:3px solid transparent;border-right:3px solid transparent;border-top:4.500px solid #a9a9a9;"></div>
<div class="a" style="left:30.9px;top:504.7px;width:16.9px;height:17.3px;background:#4b4b4b;border-radius:2px;"><svg width="16.9" height="17.3" viewBox="0 0 17 17"><path d="M4.500 10.500a2.500 2.500 0 0 1 .3-5 3.500 3.500 0 0 1 6.700-.6 2.800 2.800 0 0 1 .9 5.600z" fill="#ececec"/><path d="M8.500 6.500l2.800 3h-1.800v4.500h-2v-4.500h-1.800z" fill="#ececec" stroke="#4b4b4b" stroke-width=".7"/></svg></div>
<div class="a" style="left:51px;top:504.7px;width:17px;height:17.3px;background:#4b4b4b;border-radius:2px;"><svg width="17" height="17.3" viewBox="0 0 17 17"><path d="M4.500 3h5.500l2.500 2.500v8.500h-8z" fill="none" stroke="#ececec" stroke-width="1.2" /><path d="M9.800 3.200v2.500h2.500" fill="none" stroke="#ececec" stroke-width="0.8" /></svg></div>
<div class="a" style="left:71.7px;top:504.7px;width:21px;height:17.3px;background:#4b4b4b;border-radius:2px;"><svg width="21" height="17.3" viewBox="0 0 21 17"><path d="M4.500 3h5.500l2.500 2.500v8.500h-8z" fill="none" stroke="#ececec" stroke-width="1.200"/><rect x="6" y="7.500" width="2.300" height="2.300" fill="#ececec"/><rect x="8.600" y="10" width="2.300" height="2.300" fill="#ececec"/><path d="M14.500 7.500h4.500l-2.250 2.800z" fill="#ececec"/></svg></div>
<div class="a" style="left:96.4px;top:504.7px;width:16.4px;height:17.3px;background:#4b4b4b;border-radius:2px;"><svg width="16.4" height="17.3" viewBox="0 0 17 17"><path d="M4.500 3h5.500l2.500 2.500v8.500h-8z" fill="none" stroke="#ececec" stroke-width="1.1" /><rect x="6.500" y="7" width="4" height="5" fill="none" stroke="#ececec" stroke-width=".9"/><path d="M7.500 8.500h2M7.500 10.300h2" stroke="#ececec" stroke-width=".8"/></svg></div>
<div class="a" style="left:116.3px;top:504.7px;width:16.5px;height:17.3px;background:#4b4b4b;border-radius:2px;"><svg width="16.5" height="17.3" viewBox="0 0 17 17"><path d="M3 4.500h4l1.200 1.500h5.800v7.500h-11z" fill="#ececec" /></svg></div>
<div class="a" style="left:136.3px;top:504.7px;width:16.7px;height:17.3px;background:#4b4b4b;border-radius:2px;"><svg width="16.7" height="17.3" viewBox="0 0 17 17"><path d="M6.500 3.500h7.500v7.500h-7.500z" fill="none" stroke="#ececec" stroke-width="1.1" /><rect x="3.500" y="6.500" width="7.500" height="7.500" fill="#4b4b4b" stroke="#ececec" stroke-width="1.100"/></svg></div>
<div class="a" style="left:161px;top:505.5px;width:5.5px;height:16px;background:linear-gradient(to right,#3a3a3a,#555,#3a3a3a);border-radius:2px;"></div>
<div class="a" style="left:172.5px;top:56px;width:581px;height:471px;background:#232323;"></div>
<div class="a" style="left:173.2px;top:56px;width:289.3px;height:14.5px;background:linear-gradient(#404040,#2c2c2c);border-radius:0 2px 0 0;"></div>
<div class="a t" style="left:303.7px;top:57.2px;width:47.3px;height:12px;line-height:12px;color:#cfcfcf;font-size:8.9px;transform:scaleX(0.9072);transform-origin:0 50%;">Untitled</div>
<div class="a" style="left:173.5px;top:72.5px;width:561.5px;height:438.7px;background:#4a4847;"></div>
<div class="a" style="left:173.8px;top:97.5px;width:534.2px;height:413.7px;background:#fff;"></div>
<div class="a" style="left:735.2px;top:72.8px;width:15.3px;height:453px;background:linear-gradient(to right,#464646,#2b2b2b);"></div>
<div class="a" style="left:735.8px;top:232px;width:13.3px;height:104px;background:linear-gradient(to right,#7c7c7c,#656565);border-radius:5px;"></div>
<div class="a" style="left:739px;top:75px;width:0px;height:0px;border-left:3px solid transparent;border-right:3px solid transparent;border-bottom:4.500px solid #b5b5b5;"></div>
<div class="a" style="left:739px;top:505px;width:0px;height:0px;border-left:3px solid transparent;border-right:3px solid transparent;border-top:4.500px solid #b5b5b5;"></div>
<div class="a" style="left:173.5px;top:511px;width:562px;height:15px;background:linear-gradient(#3c3c3c,#292929);"></div>
<div class="a" style="left:404.9px;top:512px;width:138.5px;height:13px;background:linear-gradient(#747472,#626260);border-radius:5px;"></div>
<div class="a" style="left:177px;top:515.3px;width:0px;height:0px;border-top:3px solid transparent;border-bottom:3px solid transparent;border-right:4.500px solid #b5b5b5;"></div>
<div class="a" style="left:743.5px;top:515.3px;width:0px;height:0px;border-top:3px solid transparent;border-bottom:3px solid transparent;border-left:4.500px solid #b5b5b5;"></div>
<div class="a" style="left:735px;top:511px;width:14.5px;height:15px;box-shadow:inset 0 0 0 1px #2d3e4c;"></div>
<div class="a" style="left:174.5px;top:511.2px;width:10px;height:14.4px;box-shadow:inset 0 0 0 1px #2d3e4c;"></div>
<svg class="a" style="left:0;top:0" width="1024" height="583" viewBox="0 0 1024 583"><path d="M282.5 264.0 L262.0 297.0 L237.2 334.4 L240.6 338.6 L252.0 352.4 L265.8 359.8 L267.3 340.0 L270.0 322.0 L276.0 292.0 L283.3 264.0 z" fill="#8fcde9"/><path d="M355.8 264.2 L361.2 294.8 L370.2 330.8 L379.3 356.0 L390.0 339.8 L384.6 327.2 L372.0 298.4 L359.4 266.0 z" fill="#8fcde9"/><path d="M338.6 196.4 C336.8 195.0 330.5 191.4 328.0 188.0 C325.5 184.6 324.0 179.8 323.6 176.0 C323.2 172.2 324.3 168.1 325.5 165.5 C326.7 162.9 329.1 161.0 331.0 160.6 C332.9 160.2 335.2 161.1 337.0 163.0 C338.8 164.9 340.6 168.5 341.5 172.0 C342.4 175.5 342.6 179.9 342.3 184.0 C342.0 188.1 340.0 194.5 339.5 196.6" fill="#b9d531" stroke="#fa0a0a" stroke-width="1.700"/><path d="M340.3 197.4 C341.2 196.2 343.7 192.0 346.0 190.0 C348.3 188.0 351.0 186.6 354.0 185.4 C357.0 184.2 361.0 182.9 364.0 182.8 C367.0 182.7 370.4 183.9 372.0 185.0 C373.6 186.1 374.1 187.3 373.8 189.6 C373.6 191.8 373.1 196.1 370.5 198.5 C367.9 200.9 362.0 203.5 358.1 204.3 C354.2 205.1 350.0 204.6 347.0 203.4 C344.0 202.2 341.4 198.4 340.3 197.4" fill="#b9d531" stroke="#fa0a0a" stroke-width="1.700"/><path d="M334.8 172.900L335.400 185.300M349.900 199L362.300 194.300" stroke="#fa0a0a" stroke-width="1" fill="none"/><g fill="none" stroke="#fa0a0a" stroke-width="1.800" stroke-linecap="round" stroke-linejoin="round"><path d="M264.0 361.4 C262.0 359.8 255.9 355.9 252.0 352.0 C248.1 348.1 244.0 344.5 240.6 338.0 C237.2 331.5 233.4 320.8 231.6 312.8 C229.8 304.8 229.7 296.9 229.8 290.0 C229.9 283.1 230.3 278.4 232.0 271.7 C233.7 265.0 236.1 256.6 240.2 249.7 C244.3 242.8 250.2 236.0 256.6 230.5 C263.0 225.0 270.4 220.2 278.6 216.8 C286.8 213.4 296.6 211.4 306.0 210.0 C315.4 208.6 325.2 208.2 334.8 208.6 C344.4 209.0 355.1 210.0 363.6 212.7 C372.1 215.4 379.7 219.7 385.6 225.0 C391.6 230.3 395.9 237.0 399.3 244.3 C402.7 251.6 404.5 260.2 406.2 269.0 C407.9 277.8 409.5 288.8 409.5 297.0 C409.5 305.2 407.4 312.4 406.0 318.0 C404.6 323.6 403.6 326.3 400.9 330.8 C398.2 335.3 393.6 340.8 390.0 345.0 C386.4 349.2 381.1 354.2 379.3 356.0"/><path d="M274.6 250.2L283.6 261.2"/><path d="M267.4 266.8L283.8 262.2"/><path d="M365 253.9L354.6 261"/><path d="M354.8 262.4L359 265.2"/><path d="M282.5 263.5 C279.1 269.1 269.6 285.2 262.0 297.0 C254.4 308.8 241.2 328.2 237.0 334.4"/><path d="M283.8 263.0 C282.5 267.8 278.3 282.2 276.0 292.0 C273.7 301.8 271.7 310.7 270.0 322.0 C268.3 333.3 266.5 353.3 265.8 359.6"/><path d="M355.8 264.2 C356.7 269.3 358.8 283.7 361.2 294.8 C363.6 305.9 367.2 320.6 370.2 330.8 C373.2 341.0 377.8 351.8 379.3 356.0"/><path d="M359.4 266.0 C361.5 271.4 367.8 288.2 372.0 298.4 C376.2 308.6 381.6 320.3 384.6 327.2 C387.6 334.1 389.1 337.7 390.0 339.8"/><path d="M300.0 296.6 C300.8 295.4 302.4 291.3 304.5 289.5 C306.6 287.7 310.0 286.1 312.6 285.8 C315.2 285.6 317.9 286.6 320.0 288.0 C322.1 289.4 324.3 293.0 325.2 294.0"/><path d="M244.2 293L247.8 287.6"/><path d="M248.9 294.8L253.2 287.6"/><path d="M382.1 284L382.8 291.2"/><path d="M387.2 284L388.6 292"/><path d="M262.5 360.2 C263.4 360.8 266.2 363.3 268.0 363.8 C269.8 364.3 272.5 361.5 273.0 363.2 C273.5 364.9 271.8 367.4 271.2 374.0 C270.6 380.6 269.1 395.0 269.4 402.8 C269.7 410.6 270.3 416.3 273.0 420.8 C275.7 425.3 278.1 428.4 285.6 429.8 C293.1 431.2 310.2 430.0 318.0 429.1 C325.8 428.2 329.1 426.4 332.4 424.4 C335.7 422.4 338.1 419.5 337.8 417.2 C337.5 414.9 334.5 411.8 330.6 410.6 C326.7 409.4 317.1 410.1 314.4 410.0"/><path d="M339.6 417.6 C340.3 417.1 342.9 414.8 344.0 414.6 C345.1 414.4 345.6 416.8 346.5 416.6 C347.4 416.4 347.6 414.4 349.5 413.6 C351.4 412.8 355.7 411.8 357.6 411.8 C359.6 411.8 358.8 412.4 361.2 413.6 C363.6 414.8 367.8 418.7 372.0 419.0 C376.2 419.3 383.1 417.5 386.4 415.4 C389.7 413.3 391.8 409.1 391.8 406.4 C391.8 403.7 388.2 401.3 386.4 399.2 C384.6 397.1 382.3 396.8 381.0 393.8 C379.7 390.8 378.8 384.2 378.5 381.2 C378.2 378.2 379.1 376.7 379.2 375.8"/><path d="M379.3 356.0 C380.1 355.7 381.0 352.5 384.0 354.0 C387.0 355.5 393.2 361.7 397.2 365.0 C401.2 368.3 405.9 371.0 408.0 374.0 C410.1 377.0 410.4 380.6 409.8 383.0 C409.2 385.4 407.7 387.8 404.4 388.4 C401.1 389.0 394.2 388.1 390.0 386.6 C385.8 385.1 381.0 380.6 379.2 379.4"/><path d="M309.0 372.2 C312.3 371.9 323.1 369.8 328.8 370.4 C334.5 371.0 340.2 373.7 343.2 375.8 C346.2 377.9 348.0 380.9 346.8 383.0 C345.6 385.1 341.4 387.8 336.0 388.4 C330.6 389.0 318.0 386.9 314.4 386.6"/><path d="M338.9 196.8 C338.7 197.7 338.2 200.0 337.5 202.0 C336.8 204.0 335.2 207.5 334.8 208.6"/></g><text x="489.500" y="131" font-size="27.500" textLength="103" lengthAdjust="spacingAndGlyphs" font-family="Liberation Sans, sans-serif" fill="#fa0a0a" transform="rotate(-1 489 131)">Phuong</text><text x="597" y="133.500" font-size="25" textLength="106" lengthAdjust="spacingAndGlyphs" font-family="Liberation Sans, sans-serif" fill="#fa0a0a">16102010</text><text x="489.500" y="176" font-size="33" font-family="Liberation Sans, sans-serif" fill="#fa0a0a" textLength="26.500" lengthAdjust="spacingAndGlyphs">#</text><text x="523" y="180.700" font-size="31" textLength="105" lengthAdjust="spacingAndGlyphs" font-family="Liberation Sans, sans-serif" fill="#fa0a0a">HOIDAP</text><text x="639" y="181.800" font-size="30" textLength="28" lengthAdjust="spacingAndGlyphs" font-family="Liberation Sans, sans-serif" fill="#fa0a0a">#</text></svg>
<div class="a" style="left:750px;top:56px;width:5px;height:471px;background:#1f1f1f;"></div>
<div class="a" style="left:755px;top:56px;width:261px;height:471px;background:#262626;"></div>
<div class="a" style="left:755px;top:56.5px;width:261px;height:15.3px;background:linear-gradient(#3d3d3d,#2b2b2b);"></div>
<div class="a" style="left:755px;top:56.5px;width:261px;height:1px;background:#3e4c59;"></div>
<div class="a t" style="left:855.9px;top:58.3px;width:54.9px;height:12px;line-height:12px;color:#d6d6d6;font-size:8.9px;transform:scaleX(0.9188);transform-origin:0 50%;">Navigator</div>
<svg class="a" style="left:993.9px;top:59.5px" width="22" height="10" viewBox="0 0 22 10"><path d="M4 2.500h-3.500v5.500h5.500v-3.500" fill="none" stroke="#b9c0c6" stroke-width="1"/><path d="M3.500 5l3.500-3.500M4.800 1h2.700v2.700" fill="none" stroke="#c9cfd4" stroke-width="1"/><path d="M12.500 2l5.200 5.200M17.700 2l-5.200 5.200" stroke="#e4e4e4" stroke-width="2"/></svg>
<div class="a" style="left:755px;top:72px;width:261px;height:21.5px;background:#272727;"></div>
<div class="a" style="left:757.3px;top:74.5px;width:16.8px;height:16.9px;background:#4b4b4b;border-radius:2px;"><svg width="16.8" height="16.9" viewBox="0 0 17 17"><circle cx="7.300" cy="7.300" r="3.500" fill="none" stroke="#ececec" stroke-width="1.300"/><path d="M10 10l3.200 3.200" stroke="#ececec" stroke-width="1.900"/><path d="M7.500 5.500v3.600" stroke="#ececec" stroke-width="1.100"/></svg></div>
<div class="a" style="left:781.8px;top:74.5px;width:16.8px;height:16.9px;background:#4b4b4b;border-radius:2px;"><svg width="16.8" height="16.9" viewBox="0 0 17 17"><circle cx="7.300" cy="7.300" r="3.500" fill="none" stroke="#ececec" stroke-width="1.300"/><path d="M10 10l3.200 3.200" stroke="#ececec" stroke-width="1.900"/><path d="M5.500 7.300h3.600M7.300 5.500v3.600" stroke="#ececec" stroke-width="1.100"/></svg></div>
<div class="a" style="left:802.2px;top:74.5px;width:16.8px;height:16.9px;background:#4b4b4b;border-radius:2px;"><svg width="16.8" height="16.9" viewBox="0 0 17 17"><rect x="3.300" y="3.800" width="10.400" height="9.400" fill="none" stroke="#ececec" stroke-width="1"/><path d="M4.600 5h3l-3 3zM12.400 5v3l-3-3zM4.600 12v-3l3 3zM12.400 12h-3l3-3z" fill="#ececec"/><path d="M5.500 6l6 5M11.500 6l-6 5" stroke="#ececec" stroke-width=".9"/></svg></div>
<div class="a" style="left:822.1px;top:74.5px;width:16.8px;height:16.9px;background:#4b4b4b;border-radius:2px;"><svg width="16.8" height="16.9" viewBox="0 0 17 17"><circle cx="7.300" cy="7.300" r="3.500" fill="none" stroke="#ececec" stroke-width="1.300"/><path d="M10 10l3.200 3.200" stroke="#ececec" stroke-width="1.900"/><path d="M5.500 7.300h3.600" stroke="#ececec" stroke-width="1.100"/></svg></div>
<div class="a" style="left:847.7px;top:74.5px;width:16.8px;height:16.9px;background:#4b4b4b;border-radius:2px;"><svg width="16.8" height="16.9" viewBox="0 0 17 17"><path d="M6.200 3.900A5.100 5.100 0 1 1 3.600 7.200" fill="none" stroke="#d4d4d4" stroke-width="1.300"/><path d="M3.300 3.200l3.600-.4-.6 3.400z" fill="#d4d4d4"/><path d="M6.300 7.300l3.900-1.500 1.300 3.700-3.900 1.500z" fill="#ececec"/></svg></div>
<div class="a" style="left:868.2px;top:74.5px;width:16.8px;height:16.9px;background:#222;box-shadow:inset 0 0 0 1px #454545;border-radius:2px;"><svg width="16.8" height="16.9" viewBox="0 0 17 17"><rect x="5.200" y="5.700" width="6.600" height="5.600" fill="#f2f2f2"/><path d="M5.200 5.700l-2.200-2.200M11.800 5.700l2.200-2.200M5.200 11.300l-2.200 2.200M11.800 11.300l2.200 2.200" stroke="#d8d8d8" stroke-width="1"/></svg></div>
<div class="a" style="left:888px;top:74.5px;width:16.8px;height:16.9px;background:#4b4b4b;border-radius:2px;"><svg width="16.8" height="16.9" viewBox="0 0 17 17"><path d="M10.800 3.900A5.100 5.100 0 1 0 13.400 7.200" fill="none" stroke="#d4d4d4" stroke-width="1.300"/><path d="M13.700 3.200l-3.600-.4.600 3.400z" fill="#d4d4d4"/><path d="M10.700 7.300l-3.900-1.500-1.300 3.700 3.900 1.500z" fill="#ececec"/></svg></div>
<div class="a" style="left:912.8px;top:74.5px;width:16.8px;height:16.9px;background:#4b4b4b;border-radius:2px;"><svg width="16.8" height="16.9" viewBox="0 0 17 17"><rect x="3.300" y="7.600" width="3.600" height="5.400" fill="#ececec"/><rect x="10.700" y="7.900" width="3" height="4.800" fill="none" stroke="#ececec" stroke-width=".9"/><path d="M5.500 6.300c1.200-3 5.600-3 6.800 0" fill="none" stroke="#ececec" stroke-width="1"/></svg></div>
<div class="a" style="left:777.7px;top:77.5px;width:1px;height:11px;background:#454545;"></div>
<div class="a" style="left:843px;top:77.5px;width:1px;height:11px;background:#454545;"></div>
<div class="a" style="left:908.7px;top:77.5px;width:1px;height:11px;background:#454545;"></div>
<div class="a" style="left:755px;top:93.3px;width:261px;height:41.2px;background:#4a4847;"></div>
<svg class="a" style="left:858.900px;top:94.100px" width="53" height="40" viewBox="0 0 53 40"><rect width="52.300" height="39.800" fill="#fff"/><g transform="translate(-9.260,-8.560) scale(0.0878)" fill="none" stroke="#f26a6a" stroke-width="5.500"><path d="M264.0 361.4 C262.0 359.8 255.9 355.9 252.0 352.0 C248.1 348.1 244.0 344.5 240.6 338.0 C237.2 331.5 233.4 320.8 231.6 312.8 C229.8 304.8 229.7 296.9 229.8 290.0 C229.9 283.1 230.3 278.4 232.0 271.7 C233.7 265.0 236.1 256.6 240.2 249.7 C244.3 242.8 250.2 236.0 256.6 230.5 C263.0 225.0 270.4 220.2 278.6 216.8 C286.8 213.4 296.6 211.4 306.0 210.0 C315.4 208.6 325.2 208.2 334.8 208.6 C344.4 209.0 355.1 210.0 363.6 212.7 C372.1 215.4 379.7 219.7 385.6 225.0 C391.6 230.3 395.9 237.0 399.3 244.3 C402.7 251.6 404.5 260.2 406.2 269.0 C407.9 277.8 409.5 288.8 409.5 297.0 C409.5 305.2 407.4 312.4 406.0 318.0 C404.6 323.6 403.6 326.3 400.9 330.8 C398.2 335.3 393.6 340.8 390.0 345.0 C386.4 349.2 381.1 354.2 379.3 356.0"/><path d="M274.6 250.2L283.6 261.2"/><path d="M267.4 266.8L283.8 262.2"/><path d="M365 253.9L354.6 261"/><path d="M354.8 262.4L359 265.2"/><path d="M282.5 263.5 C279.1 269.1 269.6 285.2 262.0 297.0 C254.4 308.8 241.2 328.2 237.0 334.4"/><path d="M283.8 263.0 C282.5 267.8 278.3 282.2 276.0 292.0 C273.7 301.8 271.7 310.7 270.0 322.0 C268.3 333.3 266.5 353.3 265.8 359.6"/><path d="M355.8 264.2 C356.7 269.3 358.8 283.7 361.2 294.8 C363.6 305.9 367.2 320.6 370.2 330.8 C373.2 341.0 377.8 351.8 379.3 356.0"/><path d="M359.4 266.0 C361.5 271.4 367.8 288.2 372.0 298.4 C376.2 308.6 381.6 320.3 384.6 327.2 C387.6 334.1 389.1 337.7 390.0 339.8"/><path d="M300.0 296.6 C300.8 295.4 302.4 291.3 304.5 289.5 C306.6 287.7 310.0 286.1 312.6 285.8 C315.2 285.6 317.9 286.6 320.0 288.0 C322.1 289.4 324.3 293.0 325.2 294.0"/><path d="M244.2 293L247.8 287.6"/><path d="M248.9 294.8L253.2 287.6"/><path d="M382.1 284L382.8 291.2"/><path d="M387.2 284L388.6 292"/><path d="M262.5 360.2 C263.4 360.8 266.2 363.3 268.0 363.8 C269.8 364.3 272.5 361.5 273.0 363.2 C273.5 364.9 271.8 367.4 271.2 374.0 C270.6 380.6 269.1 395.0 269.4 402.8 C269.7 410.6 270.3 416.3 273.0 420.8 C275.7 425.3 278.1 428.4 285.6 429.8 C293.1 431.2 310.2 430.0 318.0 429.1 C325.8 428.2 329.1 426.4 332.4 424.4 C335.7 422.4 338.1 419.5 337.8 417.2 C337.5 414.9 334.5 411.8 330.6 410.6 C326.7 409.4 317.1 410.1 314.4 410.0"/><path d="M339.6 417.6 C340.3 417.1 342.9 414.8 344.0 414.6 C345.1 414.4 345.6 416.8 346.5 416.6 C347.4 416.4 347.6 414.4 349.5 413.6 C351.4 412.8 355.7 411.8 357.6 411.8 C359.6 411.8 358.8 412.4 361.2 413.6 C363.6 414.8 367.8 418.7 372.0 419.0 C376.2 419.3 383.1 417.5 386.4 415.4 C389.7 413.3 391.8 409.1 391.8 406.4 C391.8 403.7 388.2 401.3 386.4 399.2 C384.6 397.1 382.3 396.8 381.0 393.8 C379.7 390.8 378.8 384.2 378.5 381.2 C378.2 378.2 379.1 376.7 379.2 375.8"/><path d="M379.3 356.0 C380.1 355.7 381.0 352.5 384.0 354.0 C387.0 355.5 393.2 361.7 397.2 365.0 C401.2 368.3 405.9 371.0 408.0 374.0 C410.1 377.0 410.4 380.6 409.8 383.0 C409.2 385.4 407.7 387.8 404.4 388.4 C401.1 389.0 394.2 388.1 390.0 386.6 C385.8 385.1 381.0 380.6 379.2 379.4"/><path d="M309.0 372.2 C312.3 371.9 323.1 369.8 328.8 370.4 C334.5 371.0 340.2 373.7 343.2 375.8 C346.2 377.9 348.0 380.9 346.8 383.0 C345.6 385.1 341.4 387.8 336.0 388.4 C330.6 389.0 318.0 386.9 314.4 386.6"/><path d="M338.9 196.8 C338.7 197.7 338.2 200.0 337.5 202.0 C336.8 204.0 335.2 207.5 334.8 208.6"/><path d="M338.6 196.4 C336.8 195.0 330.5 191.4 328.0 188.0 C325.5 184.6 324.0 179.8 323.6 176.0 C323.2 172.2 324.3 168.1 325.5 165.5 C326.7 162.9 329.1 161.0 331.0 160.6 C332.9 160.2 335.2 161.1 337.0 163.0 C338.8 164.9 340.6 168.5 341.5 172.0 C342.4 175.5 342.6 179.9 342.3 184.0 C342.0 188.1 340.0 194.5 339.5 196.6"/><path d="M340.3 197.4 C341.2 196.2 343.7 192.0 346.0 190.0 C348.3 188.0 351.0 186.6 354.0 185.4 C357.0 184.2 361.0 182.9 364.0 182.8 C367.0 182.7 370.4 183.9 372.0 185.0 C373.6 186.1 374.1 187.3 373.8 189.6 C373.6 191.8 373.1 196.1 370.5 198.5 C367.9 200.9 362.0 203.5 358.1 204.3 C354.2 205.1 350.0 204.6 347.0 203.4 C344.0 202.2 341.4 198.4 340.3 197.4"/></g><text x="33.700" y="3.200" font-family="Liberation Sans, sans-serif" font-size="2.600" textLength="18.600" lengthAdjust="spacingAndGlyphs" fill="#f06a6a">Phuong16102010</text><text x="33.700" y="7.200" font-family="Liberation Sans, sans-serif" font-size="2.800" textLength="15.500" lengthAdjust="spacingAndGlyphs" fill="#f06a6a"># HOIDAP #</text><rect x="6.500" y="-1" width="45.300" height="37.300" fill="none" stroke="#e01818" stroke-width="1.300"/></svg>
<div class="a" style="left:755px;top:137.3px;width:261px;height:15.7px;background:linear-gradient(#3d3d3d,#2b2b2b);"></div>
<div class="a" style="left:755px;top:137.3px;width:261px;height:1px;background:#3e4c59;"></div>
<div class="a t" style="left:863.5px;top:140.6px;width:39.6px;height:12px;line-height:12px;color:#d6d6d6;font-size:8.9px;transform:scaleX(0.8829);transform-origin:0 50%;">Layer</div>
<svg class="a" style="left:993.9px;top:140.3px" width="22" height="10" viewBox="0 0 22 10"><path d="M4 2.500h-3.500v5.500h5.500v-3.500" fill="none" stroke="#b9c0c6" stroke-width="1"/><path d="M3.500 5l3.500-3.500M4.800 1h2.700v2.700" fill="none" stroke="#c9cfd4" stroke-width="1"/><path d="M12.500 2l5.200 5.200M17.700 2l-5.200 5.200" stroke="#e4e4e4" stroke-width="2"/></svg>
<div class="a t" style="left:758px;top:158.9px;width:47px;height:12px;line-height:12px;color:#d8d8d8;font-size:8.9px;transform:scaleX(0.8974);transform-origin:0 50%;">Opacity</div>
<div class="a" style="left:824px;top:158px;width:152.6px;height:11.5px;background:linear-gradient(to right,#74c0f7,#5aa9ea 50%,#4a8ed0);"></div>
<div class="a t" style="left:982px;top:158.9px;width:43px;height:12px;line-height:12px;color:#d8d8d8;font-size:8.9px;transform:scaleX(0.9140);transform-origin:0 50%;">100 %</div>
<div class="a t" style="left:758px;top:177.1px;width:49.8px;height:12px;line-height:12px;color:#d8d8d8;font-size:8.9px;transform:scaleX(0.8627);transform-origin:0 50%;">Blending</div>
<div class="a" style="left:825.4px;top:175px;width:186.1px;height:14.4px;background:#474747;border-radius:2px;"></div>
<div class="a t" style="left:826.7px;top:177.1px;width:44.6px;height:12px;line-height:12px;color:#e0e0e0;font-size:8.9px;transform:scaleX(0.8601);transform-origin:0 50%;">Normal</div>
<div class="a" style="left:1003.5px;top:181px;width:0px;height:0px;border-left:2.500px solid transparent;border-right:2.500px solid transparent;border-top:3px solid #a8a8a8;"></div>
<div class="a" style="left:760.5px;top:198.2px;width:8.2px;height:8.2px;box-shadow:inset 0 0 0 1px #d0d0d0;"></div>
<div class="a t" style="left:772.2px;top:196.5px;width:68.5px;height:12px;line-height:12px;color:#dcdcdc;font-size:8.9px;transform:scaleX(0.9103);transform-origin:0 50%;">Protect Alpha</div>
<div class="a" style="left:847px;top:198.2px;width:7.5px;height:8.2px;box-shadow:inset 0 0 0 1px #4a4a4a;"></div>
<div class="a t" style="left:859.4px;top:196.5px;width:46.7px;height:12px;line-height:12px;color:#777;font-size:8.9px;transform:scaleX(0.8326);transform-origin:0 50%;">Clipping</div>
<div class="a" style="left:932.5px;top:198.2px;width:8px;height:8.2px;box-shadow:inset 0 0 0 1px #d0d0d0;"></div>
<div class="a t" style="left:944.7px;top:196.5px;width:35.6px;height:12px;line-height:12px;color:#dcdcdc;font-size:8.9px;transform:scaleX(0.8321);transform-origin:0 50%;">Lock</div>
<div class="a" style="left:756px;top:213px;width:244px;height:92px;background:#4a4847;"></div>
<div class="a" style="left:756px;top:213px;width:13.5px;height:28.2px;background:#595959;"></div>
<svg class="a" style="left:756px;top:220px" width="14" height="14" viewBox="0 0 14 14"><circle cx="6.800" cy="7.100" r="3.900" fill="#d4d4d4"/></svg>
<div class="a" style="left:769.5px;top:213px;width:230.5px;height:28.2px;background:#569fd9;"></div>
<svg class="a" style="left:781px;top:217.200px" width="26" height="19.600" viewBox="0 0 26 19.600"><defs><pattern id="ck" width="5.200" height="5.200" patternUnits="userSpaceOnUse"><rect width="5.200" height="5.200" fill="#fff"/><rect width="2.600" height="2.600" fill="#e6dfdf"/><rect x="2.600" y="2.600" width="2.600" height="2.600" fill="#e6dfdf"/></pattern></defs><rect width="26" height="19.600" fill="url(#ck)"/><g transform="translate(-4.600,-4.260) scale(0.04365)" fill="none" stroke="#f3b0b0" stroke-width="10"><path d="M264.0 361.4 C262.0 359.8 255.9 355.9 252.0 352.0 C248.1 348.1 244.0 344.5 240.6 338.0 C237.2 331.5 233.4 320.8 231.6 312.8 C229.8 304.8 229.7 296.9 229.8 290.0 C229.9 283.1 230.3 278.4 232.0 271.7 C233.7 265.0 236.1 256.6 240.2 249.7 C244.3 242.8 250.2 236.0 256.6 230.5 C263.0 225.0 270.4 220.2 278.6 216.8 C286.8 213.4 296.6 211.4 306.0 210.0 C315.4 208.6 325.2 208.2 334.8 208.6 C344.4 209.0 355.1 210.0 363.6 212.7 C372.1 215.4 379.7 219.7 385.6 225.0 C391.6 230.3 395.9 237.0 399.3 244.3 C402.7 251.6 404.5 260.2 406.2 269.0 C407.9 277.8 409.5 288.8 409.5 297.0 C409.5 305.2 407.4 312.4 406.0 318.0 C404.6 323.6 403.6 326.3 400.9 330.8 C398.2 335.3 393.6 340.8 390.0 345.0 C386.4 349.2 381.1 354.2 379.3 356.0"/><path d="M274.6 250.2L283.6 261.2"/><path d="M267.4 266.8L283.8 262.2"/><path d="M365 253.9L354.6 261"/><path d="M354.8 262.4L359 265.2"/><path d="M282.5 263.5 C279.1 269.1 269.6 285.2 262.0 297.0 C254.4 308.8 241.2 328.2 237.0 334.4"/><path d="M283.8 263.0 C282.5 267.8 278.3 282.2 276.0 292.0 C273.7 301.8 271.7 310.7 270.0 322.0 C268.3 333.3 266.5 353.3 265.8 359.6"/><path d="M355.8 264.2 C356.7 269.3 358.8 283.7 361.2 294.8 C363.6 305.9 367.2 320.6 370.2 330.8 C373.2 341.0 377.8 351.8 379.3 356.0"/><path d="M359.4 266.0 C361.5 271.4 367.8 288.2 372.0 298.4 C376.2 308.6 381.6 320.3 384.6 327.2 C387.6 334.1 389.1 337.7 390.0 339.8"/><path d="M300.0 296.6 C300.8 295.4 302.4 291.3 304.5 289.5 C306.6 287.7 310.0 286.1 312.6 285.8 C315.2 285.6 317.9 286.6 320.0 288.0 C322.1 289.4 324.3 293.0 325.2 294.0"/><path d="M244.2 293L247.8 287.6"/><path d="M248.9 294.8L253.2 287.6"/><path d="M382.1 284L382.8 291.2"/><path d="M387.2 284L388.6 292"/><path d="M262.5 360.2 C263.4 360.8 266.2 363.3 268.0 363.8 C269.8 364.3 272.5 361.5 273.0 363.2 C273.5 364.9 271.8 367.4 271.2 374.0 C270.6 380.6 269.1 395.0 269.4 402.8 C269.7 410.6 270.3 416.3 273.0 420.8 C275.7 425.3 278.1 428.4 285.6 429.8 C293.1 431.2 310.2 430.0 318.0 429.1 C325.8 428.2 329.1 426.4 332.4 424.4 C335.7 422.4 338.1 419.5 337.8 417.2 C337.5 414.9 334.5 411.8 330.6 410.6 C326.7 409.4 317.1 410.1 314.4 410.0"/><path d="M339.6 417.6 C340.3 417.1 342.9 414.8 344.0 414.6 C345.1 414.4 345.6 416.8 346.5 416.6 C347.4 416.4 347.6 414.4 349.5 413.6 C351.4 412.8 355.7 411.8 357.6 411.8 C359.6 411.8 358.8 412.4 361.2 413.6 C363.6 414.8 367.8 418.7 372.0 419.0 C376.2 419.3 383.1 417.5 386.4 415.4 C389.7 413.3 391.8 409.1 391.8 406.4 C391.8 403.7 388.2 401.3 386.4 399.2 C384.6 397.1 382.3 396.8 381.0 393.8 C379.7 390.8 378.8 384.2 378.5 381.2 C378.2 378.2 379.1 376.7 379.2 375.8"/><path d="M379.3 356.0 C380.1 355.7 381.0 352.5 384.0 354.0 C387.0 355.5 393.2 361.7 397.2 365.0 C401.2 368.3 405.9 371.0 408.0 374.0 C410.1 377.0 410.4 380.6 409.8 383.0 C409.2 385.4 407.7 387.8 404.4 388.4 C401.1 389.0 394.2 388.1 390.0 386.6 C385.8 385.1 381.0 380.6 379.2 379.4"/><path d="M309.0 372.2 C312.3 371.9 323.1 369.8 328.8 370.4 C334.5 371.0 340.2 373.7 343.2 375.8 C346.2 377.9 348.0 380.9 346.8 383.0 C345.6 385.1 341.4 387.8 336.0 388.4 C330.6 389.0 318.0 386.9 314.4 386.6"/><path d="M338.9 196.8 C338.7 197.7 338.2 200.0 337.5 202.0 C336.8 204.0 335.2 207.5 334.8 208.6"/><path d="M338.6 196.4 C336.8 195.0 330.5 191.4 328.0 188.0 C325.5 184.6 324.0 179.8 323.6 176.0 C323.2 172.2 324.3 168.1 325.5 165.5 C326.7 162.9 329.1 161.0 331.0 160.6 C332.9 160.2 335.2 161.1 337.0 163.0 C338.8 164.9 340.6 168.5 341.5 172.0 C342.4 175.5 342.6 179.9 342.3 184.0 C342.0 188.1 340.0 194.5 339.5 196.6"/><path d="M340.3 197.4 C341.2 196.2 343.7 192.0 346.0 190.0 C348.3 188.0 351.0 186.6 354.0 185.4 C357.0 184.2 361.0 182.9 364.0 182.8 C367.0 182.7 370.4 183.9 372.0 185.0 C373.6 186.1 374.1 187.3 373.8 189.6 C373.6 191.8 373.1 196.1 370.5 198.5 C367.9 200.9 362.0 203.5 358.1 204.3 C354.2 205.1 350.0 204.6 347.0 203.4 C344.0 202.2 341.4 198.4 340.3 197.4"/></g><rect x="16.800" y="0.800" width="9" height="1" fill="#f6b0b0"/><rect x="16.800" y="2.700" width="7.500" height="1" fill="#f6b0b0"/></svg>
<div class="a t" style="left:819.4px;top:222.4px;width:52.6px;height:12px;line-height:12px;color:#fff;font-size:10.12px;transform:scaleX(1.0000);transform-origin:0 50%;font-weight:bold;-webkit-text-stroke:0.300px #fff;">Layer1</div>
<svg class="a" style="left:984px;top:221px" width="13" height="13" viewBox="0 0 10 10"><path d="M9.78 4.53L9.78 5.47L8.16 5.96L7.91 6.56L8.71 8.05L8.05 8.71L6.56 7.91L5.96 8.16L5.47 9.78L4.53 9.78L4.04 8.16L3.44 7.91L1.95 8.71L1.29 8.05L2.09 6.56L1.84 5.96L0.22 5.47L0.22 4.53L1.84 4.04L2.09 3.44L1.29 1.95L1.95 1.29L3.44 2.09L4.04 1.84L4.53 0.22L5.47 0.22L5.96 1.84L6.56 2.09L8.05 1.29L8.71 1.95L7.91 3.44L8.16 4.04z M6.400 5a1.400 1.400 0 1 0-2.800 0 1.400 1.400 0 1 0 2.800 0z" fill="#fff" fill-rule="evenodd"/></svg>
<div class="a" style="left:1001px;top:213px;width:14px;height:92px;background:#2c2c2c;"></div>
<div class="a" style="left:1002.3px;top:221px;width:11.4px;height:74.5px;background:linear-gradient(to right,#6a6a6a,#777 50%,#5f5f5f);border-radius:5px;"></div>
<div class="a" style="left:1005px;top:214.5px;width:0px;height:0px;border-left:3px solid transparent;border-right:3px solid transparent;border-bottom:4.500px solid #a9a9a9;"></div>
<div class="a" style="left:1005px;top:298.5px;width:0px;height:0px;border-left:3px solid transparent;border-right:3px solid transparent;border-top:4.500px solid #a9a9a9;"></div>
<div class="a" style="left:755px;top:305px;width:261px;height:22px;background:#262626;"></div>
<div class="a" style="left:758px;top:308.2px;width:17px;height:16.3px;background:#4b4b4b;border-radius:2px;"><svg width="17" height="16.3" viewBox="0 0 17 17"><path d="M4.500 3h5.500l2.500 2.500v8.500h-8z" fill="none" stroke="#ececec" stroke-width="1.2" /><path d="M9.800 3.200v2.500h2.500" fill="none" stroke="#ececec" stroke-width="0.8" /></svg></div>
<div class="a" style="left:778.2px;top:308.2px;width:17.2px;height:16.3px;background:#4b4b4b;border-radius:2px;"><svg width="17.2" height="16.3" viewBox="0 0 17 17"><path d="M4.500 3h5.500l2.500 2.500v8.500h-8z" fill="none" stroke="#ececec" stroke-width="1.1" /><text x="8.600" y="12.300" font-family="Liberation Sans, sans-serif" font-size="6" font-weight="bold" text-anchor="middle" fill="#ececec">8</text></svg></div>
<div class="a" style="left:798.7px;top:308.2px;width:17.1px;height:16.3px;background:#4b4b4b;border-radius:2px;"><svg width="17.1" height="16.3" viewBox="0 0 17 17"><path d="M4.500 3h5.500l2.500 2.500v8.500h-8z" fill="none" stroke="#ececec" stroke-width="1.1" /><text x="8.600" y="12.300" font-family="Liberation Sans, sans-serif" font-size="6" font-weight="bold" text-anchor="middle" fill="#ececec">1</text></svg></div>
<div class="a" style="left:819.1px;top:308.2px;width:21.8px;height:16.3px;background:#4b4b4b;border-radius:2px;"><svg width="21.8" height="16.3" viewBox="0 0 21.8 17"><path d="M3.500 3h5l2.500 2.500v7.500h-7.500z" fill="none" stroke="#ececec" stroke-width="1.100"/><path d="M9 11.500h4.500M11.250 9.200v4.600" stroke="#ececec" stroke-width="1.400"/><path d="M15.500 7.500h4.500l-2.250 2.800z" fill="#ececec"/></svg></div>
<div class="a" style="left:844.5px;top:308.2px;width:16.3px;height:16.3px;background:#4b4b4b;border-radius:2px;"><svg width="16.3" height="16.3" viewBox="0 0 17 17"><path d="M3 4.500h4l1.200 1.500h5.800v7.500h-11z" fill="#ececec" /></svg></div>
<div class="a" style="left:869px;top:308.2px;width:17.1px;height:16.3px;background:#4b4b4b;border-radius:2px;"><svg width="17.1" height="16.3" viewBox="0 0 17 17"><path d="M6.500 3.500h7.500v7.500h-7.500z" fill="none" stroke="#ececec" stroke-width="1.1" /><rect x="3.500" y="6.500" width="7.500" height="7.500" fill="#4b4b4b" stroke="#ececec" stroke-width="1.100"/></svg></div>
<div class="a" style="left:889.4px;top:308.2px;width:17.2px;height:16.3px;background:#222;box-shadow:inset 0 0 0 1px #454545;border-radius:2px;"><svg width="17.2" height="16.3" viewBox="0 0 17 17"><rect x="3.500" y="3.500" width="3.300" height="3.300" fill="none" stroke="#ececec" stroke-width=".9"/><rect x="3.500" y="10" width="3.300" height="3.300" fill="none" stroke="#ececec" stroke-width=".9"/><rect x="9.500" y="5.500" width="4.500" height="4.500" fill="#ececec"/><path d="M5.200 6.800v3.200M6.800 8.200h2.700" stroke="#ececec" stroke-width=".9"/></svg></div>
<div class="a" style="left:914.5px;top:308.2px;width:17.1px;height:16.3px;background:#222;box-shadow:inset 0 0 0 1px #454545;border-radius:2px;"><svg width="17.1" height="16.3" viewBox="0 0 17 17"><path d="M3.500 5.500h10M6.500 5.500v-1.500h4v1.500" fill="none" stroke="#ececec" stroke-width="1.200"/><path d="M4.500 6.500h8v7.500h-8z" fill="none" stroke="#ececec" stroke-width="1.200"/><path d="M6.800 7.500v5.500M8.500 7.500v5.500M10.200 7.500v5.500" stroke="#ececec" stroke-width="1"/></svg></div>
<div class="a" style="left:864.9px;top:311px;width:1px;height:11px;background:#454545;"></div>
<div class="a" style="left:910.4px;top:311px;width:1px;height:11px;background:#454545;"></div>
<div class="a" style="left:755px;top:327px;width:261px;height:6px;background:#1c1c1c;"></div>
<div class="a" style="left:755px;top:333px;width:261px;height:16px;background:linear-gradient(#3d3d3d,#2b2b2b);"></div>
<div class="a" style="left:755px;top:333px;width:261px;height:1px;background:#3e4c59;"></div>
<div class="a t" style="left:855.4px;top:335.6px;width:57px;height:12px;line-height:12px;color:#d6d6d6;font-size:8.9px;transform:scaleX(0.9036);transform-origin:0 50%;">Reference</div>
<svg class="a" style="left:993.9px;top:336px" width="22" height="10" viewBox="0 0 22 10"><path d="M4 2.500h-3.500v5.500h5.500v-3.500" fill="none" stroke="#b9c0c6" stroke-width="1"/><path d="M3.500 5l3.500-3.500M4.800 1h2.700v2.700" fill="none" stroke="#c9cfd4" stroke-width="1"/><path d="M12.500 2l5.200 5.200M17.700 2l-5.200 5.200" stroke="#e4e4e4" stroke-width="2"/></svg>
<div class="a" style="left:755px;top:349px;width:261px;height:22.5px;background:#272727;"></div>
<div class="a" style="left:757.3px;top:352.2px;width:16.8px;height:16.4px;background:#4b4b4b;border-radius:2px;"><svg width="16.8" height="16.4" viewBox="0 0 17 17"><path d="M4.500 10.500a2.500 2.500 0 0 1 .3-5 3.500 3.500 0 0 1 6.700-.6 2.800 2.800 0 0 1 .9 5.600z" fill="#ececec"/><path d="M8.500 6.500l2.800 3h-1.800v4.500h-2v-4.500h-1.800z" fill="#ececec" stroke="#4b4b4b" stroke-width=".7"/></svg></div>
<div class="a" style="left:777.2px;top:352.2px;width:16.8px;height:16.4px;background:#4b4b4b;border-radius:2px;"><svg width="16.8" height="16.4" viewBox="0 0 17 17"><path d="M3 4.500h4l1.200 1.500h5.300v1.500h-8l-2.500 5.500z" fill="#ececec" /><path d="M6 8.300h9l-2.300 5.200h-9.200z" fill="#ececec" /></svg></div>
<div class="a" style="left:797.3px;top:352.2px;width:16.8px;height:16.4px;background:#222;box-shadow:inset 0 0 0 1px #454545;border-radius:2px;"><svg width="16.8" height="16.4" viewBox="0 0 17 17"><path d="M5 5l7 7M12 5l-7 7" stroke="#ececec" stroke-width="1.700"/></svg></div>
<div class="a" style="left:822.1px;top:352.2px;width:16.8px;height:16.4px;background:#222;box-shadow:inset 0 0 0 1px #454545;border-radius:2px;"><svg width="16.8" height="16.4" viewBox="0 0 17 17"><circle cx="7.300" cy="7.300" r="3.500" fill="none" stroke="#ececec" stroke-width="1.300"/><path d="M10 10l3.200 3.200" stroke="#ececec" stroke-width="1.900"/><path d="M5.500 7.300h3.600M7.300 5.500v3.600" stroke="#ececec" stroke-width="1.100"/></svg></div>
<div class="a" style="left:842.3px;top:352.2px;width:16.8px;height:16.4px;background:#222;box-shadow:inset 0 0 0 1px #454545;border-radius:2px;"><svg width="16.8" height="16.4" viewBox="0 0 17 17"><rect x="3.300" y="3.800" width="10.400" height="9.400" fill="none" stroke="#ececec" stroke-width="1"/><path d="M4.600 5h3l-3 3zM12.400 5v3l-3-3zM4.600 12v-3l3 3zM12.400 12h-3l3-3z" fill="#ececec"/><path d="M5.500 6l6 5M11.500 6l-6 5" stroke="#ececec" stroke-width=".9"/></svg></div>
<div class="a" style="left:862.7px;top:352.2px;width:16.8px;height:16.4px;background:#222;box-shadow:inset 0 0 0 1px #454545;border-radius:2px;"><svg width="16.8" height="16.4" viewBox="0 0 17 17"><circle cx="7.300" cy="7.300" r="3.500" fill="none" stroke="#ececec" stroke-width="1.300"/><path d="M10 10l3.200 3.200" stroke="#ececec" stroke-width="1.900"/><path d="M5.500 7.300h3.600" stroke="#ececec" stroke-width="1.100"/></svg></div>
<div class="a" style="left:887.5px;top:352.2px;width:16.8px;height:16.4px;background:#222;box-shadow:inset 0 0 0 1px #454545;border-radius:2px;"><svg width="16.8" height="16.4" viewBox="0 0 17 17"><path d="M4 13l1-3 5-5 2 2-5 5z" fill="none" stroke="#ececec" stroke-width="1.100"/><path d="M10 4l1.500-1.500 3 3-1.500 1.500z" fill="#ececec"/></svg></div>
<div class="a" style="left:908px;top:352.2px;width:16.8px;height:16.4px;background:#4b9ad9;border-radius:2px;"><svg width="16.8" height="16.4" viewBox="0 0 17 17"><g transform="translate(-1.300,-1.300) scale(1.150)"><path d="M5 9v-3.500a.8.800 0 0 1 1.600 0v2.500-4a.8.800 0 0 1 1.600 0v3.500-4a.8.800 0 0 1 1.600 0v4.200-3a.8.800 0 0 1 1.600 0v5.300c0 2.500-1.500 3.800-3.500 3.800s-3-1-4-2.800l-1.600-2.700c-.4-.8.600-1.400 1.200-.7z" fill="#f4f8ff"/></g></svg></div>
<div class="a" style="left:933px;top:352.2px;width:16.8px;height:16.4px;background:#222;box-shadow:inset 0 0 0 1px #454545;border-radius:2px;"><svg width="16.8" height="16.4" viewBox="0 0 17 17"><path d="M6.200 3.900A5.100 5.100 0 1 1 3.600 7.200" fill="none" stroke="#d4d4d4" stroke-width="1.300"/><path d="M3.300 3.200l3.600-.4-.6 3.400z" fill="#d4d4d4"/><path d="M6.300 7.300l3.900-1.500 1.300 3.700-3.900 1.500z" fill="#ececec"/></svg></div>
<div class="a" style="left:953.4px;top:352.2px;width:16.8px;height:16.4px;background:#222;box-shadow:inset 0 0 0 1px #454545;border-radius:2px;"><svg width="16.8" height="16.4" viewBox="0 0 17 17"><rect x="5.200" y="5.700" width="6.600" height="5.600" fill="#f2f2f2"/><path d="M5.200 5.700l-2.200-2.200M11.800 5.700l2.200-2.200M5.200 11.300l-2.200 2.200M11.800 11.300l2.200 2.200" stroke="#d8d8d8" stroke-width="1"/></svg></div>
<div class="a" style="left:973.3px;top:352.2px;width:16.8px;height:16.4px;background:#222;box-shadow:inset 0 0 0 1px #454545;border-radius:2px;"><svg width="16.8" height="16.4" viewBox="0 0 17 17"><path d="M10.800 3.900A5.100 5.100 0 1 0 13.400 7.200" fill="none" stroke="#d4d4d4" stroke-width="1.300"/><path d="M13.700 3.200l-3.600-.4.600 3.400z" fill="#d4d4d4"/><path d="M10.700 7.300l-3.900-1.500-1.300 3.700 3.900 1.500z" fill="#ececec"/></svg></div>
<div class="a" style="left:817.8px;top:355px;width:1px;height:11px;background:#454545;"></div>
<div class="a" style="left:883.1px;top:355px;width:1px;height:11px;background:#454545;"></div>
<div class="a" style="left:929px;top:355px;width:1px;height:11px;background:#454545;"></div>
<div class="a" style="left:994.3px;top:355px;width:1px;height:11px;background:#454545;"></div>
<div class="a" style="left:1008.8px;top:352.5px;width:4.8px;height:16px;background:linear-gradient(to right,#3a3a3a,#585858,#3a3a3a);border-radius:2px;"></div>
<svg class="a" style="left:755px;top:371.900px" width="261" height="4.200"><defs><pattern id="ck2" width="8" height="8" patternUnits="userSpaceOnUse"><rect width="8" height="8" fill="#fff"/><rect width="4" height="4" fill="#d9d9d9"/><rect x="4" y="4" width="4" height="4" fill="#d9d9d9"/></pattern></defs><rect width="261" height="4.200" fill="url(#ck2)"/></svg>
<div class="a" style="left:755px;top:376px;width:261px;height:4.5px;background:#1c1c1c;"></div>
<div class="a" style="left:755px;top:380.3px;width:261px;height:15.2px;background:linear-gradient(#3d3d3d,#2b2b2b);"></div>
<div class="a" style="left:755px;top:380.3px;width:261px;height:1px;background:#3e4c59;"></div>
<div class="a t" style="left:855.4px;top:382.8px;width:56.7px;height:12px;line-height:12px;color:#d6d6d6;font-size:8.9px;transform:scaleX(0.8552);transform-origin:0 50%;">Brush Size</div>
<svg class="a" style="left:993.9px;top:383.3px" width="22" height="10" viewBox="0 0 22 10"><path d="M4 2.500h-3.500v5.500h5.500v-3.500" fill="none" stroke="#b9c0c6" stroke-width="1"/><path d="M3.500 5l3.500-3.500M4.800 1h2.700v2.700" fill="none" stroke="#c9cfd4" stroke-width="1"/><path d="M12.500 2l5.200 5.200M17.700 2l-5.200 5.200" stroke="#e4e4e4" stroke-width="2"/></svg>
<div class="a" style="left:755px;top:395.5px;width:261px;height:131px;background:#4a4847;"></div>
<svg class="a" style="left:754.7px;top:396px" width="237.54" height="111.2" viewBox="0 0 237.54 111.2" font-family="Liberation Sans, sans-serif" font-size="7.600" text-anchor="middle" fill="#fff">
<rect width="237.04" height="110.7" fill="#4f4f4f"/>
<rect x="0.5" y="0.5" width="28.63" height="35.9" fill="#5b5b5b"/>
<circle cx="14.815" cy="14.5" r="0.5" fill="#f2f2f2" fill-opacity="0.388889"/>
<rect x="30.13" y="0.5" width="28.63" height="35.9" fill="#5b5b5b"/>
<circle cx="44.445" cy="14.5" r="0.55" fill="#f2f2f2" fill-opacity="0.611111"/>
<rect x="59.76" y="0.5" width="28.63" height="35.9" fill="#5b5b5b"/>
<circle cx="74.075" cy="14.5" r="0.8" fill="#f2f2f2" fill-opacity="1"/>
<rect x="89.39" y="0.5" width="28.63" height="35.9" fill="#5b5b5b"/>
<circle cx="103.705" cy="14.5" r="1.15" fill="#f2f2f2" fill-opacity="1"/>
<rect x="119.02" y="0.5" width="28.63" height="35.9" fill="#5b5b5b"/>
<circle cx="133.335" cy="14.5" r="1.55" fill="#f2f2f2" fill-opacity="1"/>
<rect x="148.65" y="0.5" width="28.63" height="35.9" fill="#5b5b5b"/>
<circle cx="162.965" cy="14.5" r="1.9" fill="#f2f2f2" fill-opacity="1"/>
<rect x="178.28" y="0.5" width="28.63" height="35.9" fill="#5b5b5b"/>
<circle cx="192.595" cy="14.5" r="2.6" fill="#f2f2f2" fill-opacity="1"/>
<rect x="207.91" y="0.5" width="28.63" height="35.9" fill="#5b5b5b"/>
<circle cx="222.225" cy="14.5" r="3.75" fill="#f2f2f2" fill-opacity="1"/>
<rect x="0.5" y="37.4" width="28.63" height="35.9" fill="#5b5b5b"/>
<circle cx="14.815" cy="51.4" r="4.5" fill="#f2f2f2" fill-opacity="1"/>
<rect x="30.13" y="37.4" width="28.63" height="35.9" fill="#5b5b5b"/>
<circle cx="44.445" cy="51.4" r="5.65" fill="#f2f2f2" fill-opacity="1"/>
<rect x="59.76" y="37.4" width="28.63" height="35.9" fill="#5b5b5b"/>
<circle cx="74.075" cy="51.4" r="7.5" fill="#f2f2f2" fill-opacity="1"/>
<rect x="89.39" y="37.4" width="28.63" height="35.9" fill="#5b5b5b"/>
<circle cx="103.705" cy="51.4" r="9.15" fill="#f2f2f2" fill-opacity="1"/>
<rect x="119.02" y="37.4" width="28.63" height="35.9" fill="#5b5b5b"/>
<circle cx="133.335" cy="51.4" r="9.15" fill="#f2f2f2" fill-opacity="1"/>
<rect x="148.65" y="37.4" width="28.63" height="35.9" fill="#5b5b5b"/>
<circle cx="162.965" cy="51.4" r="9.15" fill="#f2f2f2" fill-opacity="1"/>
<rect x="178.28" y="37.4" width="28.63" height="35.9" fill="#5b5b5b"/>
<circle cx="192.595" cy="51.4" r="9.15" fill="#f2f2f2" fill-opacity="1"/>
<rect x="207.91" y="37.4" width="28.63" height="35.9" fill="#5b5b5b"/>
<circle cx="222.225" cy="51.4" r="9.15" fill="#f2f2f2" fill-opacity="1"/>
<rect x="0.5" y="74.3" width="28.63" height="35.9" fill="#5b5b5b"/>
<circle cx="14.815" cy="88.3" r="9.15" fill="#f2f2f2" fill-opacity="1"/>
<rect x="30.13" y="74.3" width="28.63" height="35.9" fill="#5b5b5b"/>
<circle cx="44.445" cy="88.3" r="9.15" fill="#f2f2f2" fill-opacity="1"/>
<rect x="59.76" y="74.3" width="28.63" height="35.9" fill="#5b5b5b"/>
<circle cx="74.075" cy="88.3" r="9.15" fill="#f2f2f2" fill-opacity="1"/>
<rect x="89.39" y="74.3" width="28.63" height="35.9" fill="#5b5b5b"/>
<circle cx="103.705" cy="88.3" r="9.15" fill="#f2f2f2" fill-opacity="1"/>
<rect x="119.02" y="74.3" width="28.63" height="35.9" fill="#5b5b5b"/>
<circle cx="133.335" cy="88.3" r="9.15" fill="#f2f2f2" fill-opacity="1"/>
<rect x="148.65" y="74.3" width="28.63" height="35.9" fill="#5b5b5b"/>
<circle cx="162.965" cy="88.3" r="9.15" fill="#f2f2f2" fill-opacity="1"/>
<rect x="178.28" y="74.3" width="28.63" height="35.9" fill="#5b5b5b"/>
<circle cx="192.595" cy="88.3" r="9.15" fill="#f2f2f2" fill-opacity="1"/>
<rect x="207.91" y="74.3" width="28.63" height="35.9" fill="#5b5b5b"/>
<circle cx="222.225" cy="88.3" r="9.15" fill="#f2f2f2" fill-opacity="1"/>
</svg>
<div class="a t" style="left:754.7px;top:423.5px;width:29.63px;height:9px;line-height:9px;text-align:center;color:#fff;font-size:7.700px;">1</div>
<div class="a t" style="left:784.33px;top:423.5px;width:29.63px;height:9px;line-height:9px;text-align:center;color:#fff;font-size:7.700px;">1.5</div>
<div class="a t" style="left:813.96px;top:423.5px;width:29.63px;height:9px;line-height:9px;text-align:center;color:#fff;font-size:7.700px;">2</div>
<div class="a t" style="left:843.59px;top:423.5px;width:29.63px;height:9px;line-height:9px;text-align:center;color:#fff;font-size:7.700px;">3</div>
<div class="a t" style="left:873.22px;top:423.5px;width:29.63px;height:9px;line-height:9px;text-align:center;color:#fff;font-size:7.700px;">4</div>
<div class="a t" style="left:902.85px;top:423.5px;width:29.63px;height:9px;line-height:9px;text-align:center;color:#fff;font-size:7.700px;">5</div>
<div class="a t" style="left:932.48px;top:423.5px;width:29.63px;height:9px;line-height:9px;text-align:center;color:#fff;font-size:7.700px;">7</div>
<div class="a t" style="left:962.11px;top:423.5px;width:29.63px;height:9px;line-height:9px;text-align:center;color:#fff;font-size:7.700px;">10</div>
<div class="a t" style="left:754.7px;top:460.4px;width:29.63px;height:9px;line-height:9px;text-align:center;color:#fff;font-size:7.700px;">12</div>
<div class="a t" style="left:784.33px;top:460.4px;width:29.63px;height:9px;line-height:9px;text-align:center;color:#fff;font-size:7.700px;">15</div>
<div class="a t" style="left:813.96px;top:460.4px;width:29.63px;height:9px;line-height:9px;text-align:center;color:#fff;font-size:7.700px;">20</div>
<div class="a t" style="left:843.59px;top:460.4px;width:29.63px;height:9px;line-height:9px;text-align:center;color:#fff;font-size:7.700px;">25</div>
<div class="a t" style="left:873.22px;top:460.4px;width:29.63px;height:9px;line-height:9px;text-align:center;color:#fff;font-size:7.700px;">30</div>
<div class="a t" style="left:902.85px;top:460.4px;width:29.63px;height:9px;line-height:9px;text-align:center;color:#fff;font-size:7.700px;">40</div>
<div class="a t" style="left:932.48px;top:460.4px;width:29.63px;height:9px;line-height:9px;text-align:center;color:#fff;font-size:7.700px;">50</div>
<div class="a t" style="left:962.11px;top:460.4px;width:29.63px;height:9px;line-height:9px;text-align:center;color:#fff;font-size:7.700px;">70</div>
<div class="a t" style="left:754.7px;top:497.3px;width:29.63px;height:9px;line-height:9px;text-align:center;color:#fff;font-size:7.700px;">100</div>
<div class="a t" style="left:784.33px;top:497.3px;width:29.63px;height:9px;line-height:9px;text-align:center;color:#fff;font-size:7.700px;">150</div>
<div class="a t" style="left:813.96px;top:497.3px;width:29.63px;height:9px;line-height:9px;text-align:center;color:#fff;font-size:7.700px;">200</div>
<div class="a t" style="left:843.59px;top:497.3px;width:29.63px;height:9px;line-height:9px;text-align:center;color:#fff;font-size:7.700px;">300</div>
<div class="a t" style="left:873.22px;top:497.3px;width:29.63px;height:9px;line-height:9px;text-align:center;color:#fff;font-size:7.700px;">400</div>
<div class="a t" style="left:902.85px;top:497.3px;width:29.63px;height:9px;line-height:9px;text-align:center;color:#fff;font-size:7.700px;">500</div>
<div class="a t" style="left:932.48px;top:497.3px;width:29.63px;height:9px;line-height:9px;text-align:center;color:#fff;font-size:7.700px;">700</div>
<div class="a t" style="left:962.11px;top:497.3px;width:29.63px;height:9px;line-height:9px;text-align:center;color:#fff;font-size:7.700px;">1000</div>
<div class="a" style="left:1002.5px;top:396px;width:13.2px;height:130.5px;background:#2c2c2c;"></div>
<div class="a" style="left:1003.4px;top:404.2px;width:11.4px;height:113.3px;background:linear-gradient(to right,#6a6a6a,#787878 50%,#5f5f5f);border-radius:5px;"></div>
<div class="a" style="left:1006.2px;top:398px;width:0px;height:0px;border-left:3px solid transparent;border-right:3px solid transparent;border-bottom:4.500px solid #a9a9a9;"></div>
<div class="a" style="left:1006.2px;top:520.5px;width:0px;height:0px;border-left:3px solid transparent;border-right:3px solid transparent;border-top:4.500px solid #a9a9a9;"></div>
<div class="a" style="left:0px;top:526.5px;width:1017px;height:15.5px;background:#252525;"></div>
<div class="a t" style="left:3.3px;top:529px;width:84.7px;height:12px;line-height:12px;color:#dcdcdc;font-size:8.9px;transform:scaleX(0.9433);transform-origin:0 50%;">1600 * 1200 pixel</div>
<div class="a t" style="left:75.7px;top:529px;width:72.1px;height:12px;line-height:12px;color:#dcdcdc;font-size:8.9px;transform:scaleX(0.9459);transform-origin:0 50%;">(11.6 * 8.7cm)</div>
<div class="a t" style="left:135.5px;top:529px;width:49.5px;height:12px;line-height:12px;color:#dcdcdc;font-size:8.9px;transform:scaleX(1.0132);transform-origin:0 50%;">350 dpi</div>
<div class="a t" style="left:170.3px;top:529px;width:38.3px;height:12px;line-height:12px;color:#dcdcdc;font-size:8.9px;transform:scaleX(0.9047);transform-origin:0 50%;">50 %</div>
<div class="a t" style="left:195.9px;top:529px;width:61.5px;height:12px;line-height:12px;color:#dcdcdc;font-size:8.9px;transform:scaleX(0.9143);transform-origin:0 50%;">( 494, 885 )</div>
<div class="a t" style="left:244.7px;top:529px;width:424.7px;height:12px;line-height:12px;color:#dcdcdc;font-size:8.9px;transform:scaleX(1.0016);transform-origin:0 50%;">Draw a straight line by holding down Shift, Change a brush size by holding down Ctrl, Alt, and dragging</div>
<div class="a" style="left:0px;top:541.8px;width:1017px;height:29.2px;background:linear-gradient(to right,#0d1030,#141845 12%,#10143a 30%,#0b0d26 50%,#0e1130 70%,#12163f 88%,#0b0d27);"></div>
<div class="a" style="left:0px;top:541.8px;width:1017px;height:1px;background:#6f7391;"></div>
<div class="a" style="left:0px;top:542.8px;width:1017px;height:1px;background:#2a2d52;"></div>
<svg class="a" style="left:0;top:541.800px" width="1017" height="29.200" viewBox="0 541.800 1017 29.200"><defs>
<radialGradient id="orb" cx=".5" cy=".35" r=".7"><stop offset="0" stop-color="#9fd4f5"/><stop offset=".45" stop-color="#3b82c4"/><stop offset="1" stop-color="#12305e"/></radialGradient>
<linearGradient id="mbg" x1="0" y1="0" x2="0" y2="1"><stop offset="0" stop-color="#ef4136"/><stop offset=".4" stop-color="#f58a1f"/><stop offset=".7" stop-color="#8cc63f"/><stop offset="1" stop-color="#27a9a0"/></linearGradient>
<linearGradient id="tbtn" x1="0" y1="0" x2="0" y2="1"><stop offset="0" stop-color="#8b8da3" stop-opacity=".85"/><stop offset=".48" stop-color="#56586f" stop-opacity=".8"/><stop offset=".52" stop-color="#35374f" stop-opacity=".8"/><stop offset="1" stop-color="#3f4159" stop-opacity=".8"/></linearGradient>
<linearGradient id="tbtnA" x1="0" y1="0" x2="0" y2="1"><stop offset="0" stop-color="#c9cbd8" stop-opacity=".9"/><stop offset=".48" stop-color="#9698ac" stop-opacity=".85"/><stop offset=".52" stop-color="#74768c" stop-opacity=".85"/><stop offset="1" stop-color="#9092a7" stop-opacity=".85"/></linearGradient>
</defs><circle cx="20" cy="556.500" r="13.600" fill="url(#orb)" stroke="#7fb2dc" stroke-width=".8"/><path d="M13.500 551.500q3-1.300 5.800 0v4.600q-2.900-1.200-5.800 0z" fill="#f25022" transform="rotate(-6 20 556.500)"/><path d="M20.700 551.800q3 1.300 5.800 0v4.600q-2.900 1.200-5.800 0z" fill="#7fba00" transform="rotate(-6 20 556.500)"/><path d="M13.500 557.300q3-1.300 5.800 0v4.600q-2.900-1.200-5.800 0z" fill="#00a4ef" transform="rotate(-6 20 556.500)"/><path d="M20.700 557.600q3 1.300 5.800 0v4.600q-2.900 1.200-5.800 0z" fill="#ffb900" transform="rotate(-6 20 556.500)"/><rect x="43.300" y="545.5" width="1" height="1" fill="#4f5274"/><rect x="45.300" y="546.8" width="1" height="1" fill="#4f5274"/><rect x="47.300" y="545.5" width="1" height="1" fill="#4f5274"/><rect x="43.300" y="548.1" width="1" height="1" fill="#4f5274"/><rect x="45.300" y="549.4" width="1" height="1" fill="#4f5274"/><rect x="47.300" y="548.1" width="1" height="1" fill="#4f5274"/><rect x="43.300" y="550.7" width="1" height="1" fill="#4f5274"/><rect x="45.300" y="552" width="1" height="1" fill="#4f5274"/><rect x="47.300" y="550.7" width="1" height="1" fill="#4f5274"/><rect x="43.300" y="553.3" width="1" height="1" fill="#4f5274"/><rect x="45.300" y="554.6" width="1" height="1" fill="#4f5274"/><rect x="47.300" y="553.3" width="1" height="1" fill="#4f5274"/><rect x="43.300" y="555.9" width="1" height="1" fill="#4f5274"/><rect x="45.300" y="557.2" width="1" height="1" fill="#4f5274"/><rect x="47.300" y="555.9" width="1" height="1" fill="#4f5274"/><rect x="43.300" y="558.5" width="1" height="1" fill="#4f5274"/><rect x="45.300" y="559.8" width="1" height="1" fill="#4f5274"/><rect x="47.300" y="558.5" width="1" height="1" fill="#4f5274"/><rect x="43.300" y="561.1" width="1" height="1" fill="#4f5274"/><rect x="45.300" y="562.4" width="1" height="1" fill="#4f5274"/><rect x="47.300" y="561.1" width="1" height="1" fill="#4f5274"/><rect x="43.300" y="563.7" width="1" height="1" fill="#4f5274"/><rect x="45.300" y="565" width="1" height="1" fill="#4f5274"/><rect x="47.300" y="563.7" width="1" height="1" fill="#4f5274"/><rect x="43.300" y="566.3" width="1" height="1" fill="#4f5274"/><rect x="45.300" y="567.6" width="1" height="1" fill="#4f5274"/><rect x="47.300" y="566.3" width="1" height="1" fill="#4f5274"/><path d="M67.700 548v16.700l12.800-8.350z" fill="#6b3fd3"/><path d="M88.600 548v16.700l-11.200-8.350z" fill="#cdb9f6"/><path d="M77.400 556.350l3.100-2v4z" fill="#8f6be3"/><circle cx="123.800" cy="555.800" r="11.200" fill="#4caf50" stroke="#e6f2e6" stroke-width="1"/><path d="M123.800 555.800L126 543.500 135.500 549.500z" fill="#f3f7f1"/><circle cx="123.500" cy="556.800" r="4.300" fill="none" stroke="#f4faf4" stroke-width="1.700"/><path d="M126.300 550.500l1.200-5.800 1.600.5-1.600 5.800z" fill="#e8a21c"/><path d="M128.800 551.800l3.600-5.400 1.500 1-3.700 5.300z" fill="#d9342b"/><path d="M130.600 554l4.600-3 .9 1.500-4.800 2.700z" fill="#e2572b"/><rect x="149.500" y="543" width="42.500" height="27" rx="2" fill="url(#tbtn)" stroke="#8d8fa6" stroke-opacity=".6" stroke-width=".8"/><circle cx="170.5" cy="556.5" r="11" fill="#fbc116"/><path d="M170.5 556.5 L160.974 551 A11 11 0 0 1 180.026 551 z" fill="#e33b2e"/><path d="M170.5 556.5 L160.974 551 A11 11 0 0 0 170.5 567.5 z" fill="#2da94f"/><path d="M160.974 551 L180.026 551 L170.5 556.5 z" fill="#e33b2e"/><path d="M159.800 554.500 A11 11 0 0 1 181.200 554.500 L170.500 554.500z" fill="#e33b2e"/><circle cx="170.5" cy="556.5" r="5.200" fill="#fff"/><circle cx="170.5" cy="556.5" r="4" fill="#4a8af4"/><rect x="195.500" y="543" width="42.500" height="27" rx="2" fill="url(#tbtnA)" stroke="#c9cbd8" stroke-opacity=".8" stroke-width=".8"/><rect x="205" y="545.200" width="23" height="22.500" rx="4" fill="#f4f4f4"/><path d="M217.500 548.200c1.200 2.800-.8 4.300-2.800 6.200-2.300 2.100-3.600 4.300-2.800 7.200 1 3.400 4.800 4.800 7.800 3.900 3.300-1 5.200-4.300 4.300-8.200-.8-3.300-3.600-6.300-6.500-9.100z" fill="url(#mbg)"/><path d="M212.300 558.500c-.9 3.200 1.200 6.400 4.600 7.100-2.600-1.700-3.600-4.300-2.600-7.300.5-1.500 1.500-2.700 2.600-3.800-2.300 1-4 2-4.600 4z" fill="#1fa67a"/><path d="M220.500 553c2.700 2.600 3.800 5.800 2.700 8.600-.9 2.300-2.900 3.700-5.300 4 3.900.6 7-2.600 6.300-6.900-.4-2.100-1.800-4-3.700-5.700z" fill="#2f8fdc"/><rect x="241.500" y="543" width="42.500" height="27" rx="2" fill="url(#tbtn)" stroke="#8d8fa6" stroke-opacity=".6" stroke-width=".8"/><ellipse cx="261" cy="558.500" rx="9.500" ry="7.500" fill="#e9e4d6" stroke="#b9b2a0" stroke-width=".7" transform="rotate(-15 261 558.500)"/><circle cx="256" cy="557" r="1.800" fill="#e23b2e"/><circle cx="259.500" cy="554" r="1.800" fill="#f2b21b"/><circle cx="264" cy="553.500" r="1.800" fill="#3aa04a"/><circle cx="258" cy="561.500" r="1.800" fill="#3a6fd8"/><path d="M262 566l6.500-14 1.800.8-6.500 14z" fill="#c98a3c"/><path d="M268.500 552l2-4.500 1.800 1-2 4.300z" fill="#e8c98a"/><rect x="904" y="545.5" width="1" height="1" fill="#4d4f6c"/><rect x="906" y="546.8" width="1" height="1" fill="#4d4f6c"/><rect x="908" y="545.5" width="1" height="1" fill="#4d4f6c"/><rect x="904" y="548.1" width="1" height="1" fill="#4d4f6c"/><rect x="906" y="549.4" width="1" height="1" fill="#4d4f6c"/><rect x="908" y="548.1" width="1" height="1" fill="#4d4f6c"/><rect x="904" y="550.7" width="1" height="1" fill="#4d4f6c"/><rect x="906" y="552" width="1" height="1" fill="#4d4f6c"/><rect x="908" y="550.7" width="1" height="1" fill="#4d4f6c"/><rect x="904" y="553.3" width="1" height="1" fill="#4d4f6c"/><rect x="906" y="554.6" width="1" height="1" fill="#4d4f6c"/><rect x="908" y="553.3" width="1" height="1" fill="#4d4f6c"/><rect x="904" y="555.9" width="1" height="1" fill="#4d4f6c"/><rect x="906" y="557.2" width="1" height="1" fill="#4d4f6c"/><rect x="908" y="555.9" width="1" height="1" fill="#4d4f6c"/><rect x="904" y="558.5" width="1" height="1" fill="#4d4f6c"/><rect x="906" y="559.8" width="1" height="1" fill="#4d4f6c"/><rect x="908" y="558.5" width="1" height="1" fill="#4d4f6c"/><rect x="904" y="561.1" width="1" height="1" fill="#4d4f6c"/><rect x="906" y="562.4" width="1" height="1" fill="#4d4f6c"/><rect x="908" y="561.1" width="1" height="1" fill="#4d4f6c"/><rect x="904" y="563.7" width="1" height="1" fill="#4d4f6c"/><rect x="906" y="565" width="1" height="1" fill="#4d4f6c"/><rect x="908" y="563.7" width="1" height="1" fill="#4d4f6c"/><rect x="904" y="566.3" width="1" height="1" fill="#4d4f6c"/><rect x="906" y="567.6" width="1" height="1" fill="#4d4f6c"/><rect x="908" y="566.3" width="1" height="1" fill="#4d4f6c"/></svg>
<div class="a t" style="left:917px;top:547.6px;width:31px;height:12px;line-height:12px;color:#f0f0f0;font-size:8.9px;transform:scaleX(0.8922);transform-origin:0 50%;">EN</div>
<div class="a" style="left:939.8px;top:555.5px;width:0px;height:0px;border-left:2.500px solid transparent;border-right:2.500px solid transparent;border-bottom:3px solid #f0f0f0;"></div>
<div class="a t" style="left:960.5px;top:542.6px;width:51.9px;height:12px;line-height:12px;color:#f4f4f4;font-size:8.9px;transform:scaleX(0.9652);transform-origin:0 50%;">2:03 PM</div>
<div class="a t" style="left:956.5px;top:556px;width:58.5px;height:12px;line-height:12px;color:#f4f4f4;font-size:8.9px;transform:scaleX(0.9751);transform-origin:0 50%;">6/24/2021</div>
<div class="a" style="left:1005.6px;top:543px;width:10.4px;height:27px;background:linear-gradient(to right,#2a2c45,#15172e 40%,#23253e);box-shadow:inset 1px 0 0 #8b8ea6,inset -1px 0 0 #3c3e58;"></div>
</body></html>
